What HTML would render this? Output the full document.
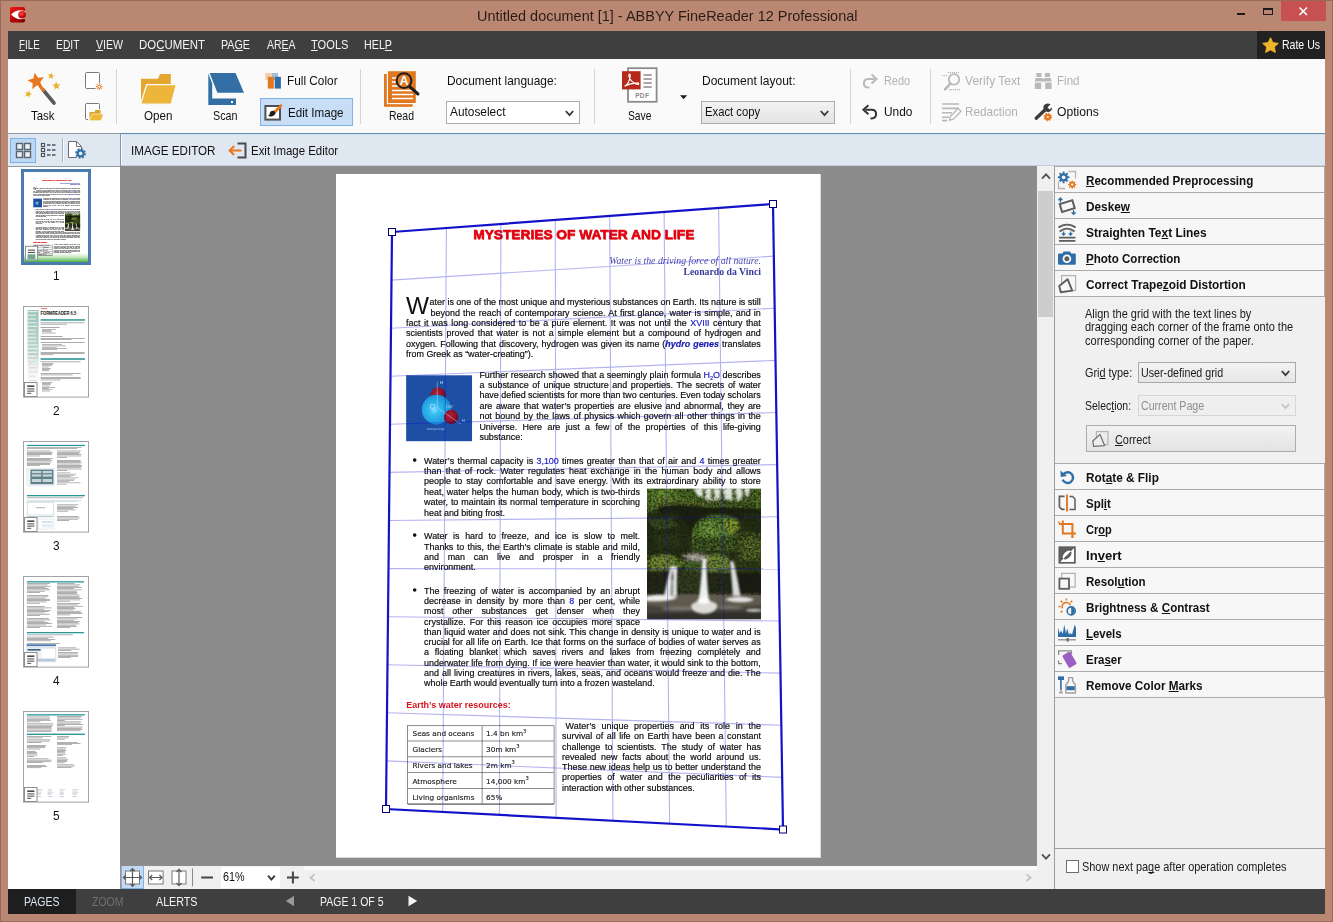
<!DOCTYPE html>
<html lang="en"><head><meta charset="utf-8"><title>Untitled document [1] - ABBYY FineReader 12 Professional</title>
<style>
html,body{margin:0;padding:0;}
body{width:1333px;height:922px;overflow:hidden;position:relative;background:#BA8773;font-family:"Liberation Sans",sans-serif;}
.b{position:absolute;box-sizing:border-box;}
.t{position:absolute;white-space:nowrap;line-height:1;transform-origin:0 50%;display:inline-block;}
.t u{text-decoration:underline;text-underline-offset:1px;text-decoration-skip-ink:none;}
svg{position:absolute;overflow:visible;}
.doc{position:absolute;width:794px;height:1123px;transform:scale(0.61);transform-origin:0 0;font-family:"Liberation Sans",sans-serif;font-size:14.667px;color:#0c0c0c;overflow:hidden;}
.doc>div,.doc>svg{position:absolute;}
.ln{-webkit-text-stroke:0.3px currentColor;white-space:nowrap;line-height:16.85px;height:16.85px;text-align:left;}
.ln.j{text-align:justify;text-align-last:justify;white-space:normal;}
.ln b{font-weight:normal;}
.bl{color:#2020C8;}
.hg{color:#1818B0;font-weight:bold !important;font-style:italic;}
.ttl{font-weight:bold;font-size:21.33px;line-height:1;color:#E2000F;white-space:nowrap;transform-origin:0 50%;-webkit-text-stroke:0.9px #E2000F;text-shadow:0.6px 0.6px 1px rgba(200,0,0,0.5);}
.q1{font-family:"Liberation Serif",serif;font-style:italic;font-size:16px;line-height:1;color:#4848B0;white-space:nowrap;}
.q2{font-family:"Liberation Serif",serif;font-weight:bold;font-size:16px;line-height:1;color:#3A3A9A;white-space:nowrap;}
.dc{font-size:40px;line-height:1;color:#111;}
.bu{width:6px;height:6px;border-radius:50%;background:#111;}
.h2{font-weight:bold;font-size:13.33px;line-height:1;color:#D8121C;white-space:nowrap;transform-origin:0 50%;}
.tbl{border:1.4px solid #444;box-sizing:border-box;font-family:"DejaVu Sans","Liberation Sans",sans-serif;font-size:12px;color:#222;}
.tr{position:absolute;left:0;right:0;border-bottom:1.4px solid #444;box-sizing:border-box;}
.tr:last-of-type{border-bottom:none;}
.tc{position:absolute;top:50%;transform:translateY(-44%);-webkit-text-stroke:0.25px currentColor;white-space:nowrap;line-height:1;}
.tc sup{font-size:8.5px;vertical-align:top;position:relative;top:-3px;}
.tv{position:absolute;top:0;bottom:0;width:1.4px;background:#444;}
.ln sub{font-size:9px;vertical-align:baseline;position:relative;top:3px;}
.doc.th{transform:scale(0.0806);color:#222;-webkit-text-stroke:0.5px #222;}
.doc.th .bl{-webkit-text-stroke:0.5px #2020C8;}
.doc.th .ttl{-webkit-text-stroke:1.5px #E2000F;text-shadow:none;}
.doc.th .q1,.doc.th .q2{-webkit-text-stroke:0.6px #4848B0;}
.doc.th .h2{-webkit-text-stroke:1.5px #D8121C;}
.doc.th .tbl{-webkit-text-stroke:1px #444;border-width:4px;}
.doc.th .tr{border-bottom-width:4px;}.doc.th .tv{width:4px;}
</style></head><body>
<div class="b " style="left:0px;top:0px;width:1333px;height:922px;border:1px solid #976B5B;"></div>
<svg style="left:10px;top:7px" width="16" height="16" viewBox="0 0 16 16">
<defs><linearGradient id="ig" x1="0" y1="0" x2="0.6" y2="1"><stop offset="0" stop-color="#F01818"/><stop offset="0.5" stop-color="#CC0808"/><stop offset="1" stop-color="#8A0000"/></linearGradient>
<radialGradient id="ib" cx="0.4" cy="0.35" r="0.7"><stop offset="0" stop-color="#FF4A4A"/><stop offset="0.6" stop-color="#D01010"/><stop offset="1" stop-color="#8A0000"/></radialGradient></defs>
<rect x="0" y="0" width="15" height="15.6" rx="1.8" fill="url(#ig)"/>
<path d="M1 7.6 C5 3.4 10 2.2 15 4.2 L15 11.6 C10 13.4 5 12 1 7.6Z" fill="#fff"/>
<circle cx="12" cy="7.8" r="3.8" fill="url(#ib)"/></svg>
<span class="t " style="left:476.50px;top:7.00px;font-size:15px;line-height:17px;color:#2a1d18;transform:scaleX(0.9654);">Untitled document [1] - ABBYY FineReader 12 Professional</span>
<div class="b " style="left:1237px;top:12.5px;width:8px;height:2px;background:#1a1a1a;"></div>
<div class="b " style="left:1263px;top:8px;width:10px;height:7px;border:1px solid #1a1a1a;border-top-width:2px;"></div>
<div class="b " style="left:1281px;top:1px;width:45px;height:20px;background:#C75050;"></div>
<svg style="left:1298px;top:6px" width="11" height="11" viewBox="0 0 11 11"><path d="M1.5 1.5 L9 9 M9 1.5 L1.5 9" stroke="#fff" stroke-width="1.6" fill="none"/></svg>
<div class="b " style="left:8px;top:31px;width:1317px;height:28px;background:#3F3F3F;"></div>
<span class="t " style="left:19.00px;top:37.30px;font-size:13px;line-height:15px;color:#F4F4F4;transform:scaleX(0.7558);"><u>F</u>ILE</span>
<span class="t " style="left:56.00px;top:37.30px;font-size:13px;line-height:15px;color:#F4F4F4;transform:scaleX(0.7936);">E<u>D</u>IT</span>
<span class="t " style="left:96.00px;top:37.30px;font-size:13px;line-height:15px;color:#F4F4F4;transform:scaleX(0.8127);"><u>V</u>IEW</span>
<span class="t " style="left:139.00px;top:37.30px;font-size:13px;line-height:15px;color:#F4F4F4;transform:scaleX(0.8787);">DO<u>C</u>UMENT</span>
<span class="t " style="left:221.00px;top:37.30px;font-size:13px;line-height:15px;color:#F4F4F4;transform:scaleX(0.8248);">PA<u>G</u>E</span>
<span class="t " style="left:266.50px;top:37.30px;font-size:13px;line-height:15px;color:#F4F4F4;transform:scaleX(0.8050);">AR<u>E</u>A</span>
<span class="t " style="left:311.00px;top:37.30px;font-size:13px;line-height:15px;color:#F4F4F4;transform:scaleX(0.8556);"><u>T</u>OOLS</span>
<span class="t " style="left:364.00px;top:37.30px;font-size:13px;line-height:15px;color:#F4F4F4;transform:scaleX(0.8245);">HEL<u>P</u></span>
<div class="b " style="left:1257px;top:31px;width:68px;height:28px;background:#222222;"></div>
<svg style="left:1262px;top:37px" width="17" height="16" viewBox="0 0 17 16"><path d="M8.5 0.6 L10.9 5.6 L16.4 6.3 L12.4 10.1 L13.4 15.5 L8.5 12.9 L3.6 15.5 L4.6 10.1 L0.6 6.3 L6.1 5.6Z" fill="#F0B429" stroke="#F0B429" stroke-width="0.8" stroke-linejoin="round"/></svg>
<span class="t " style="left:1282.00px;top:37.30px;font-size:13px;line-height:15px;color:#fff;transform:scaleX(0.8092);">Rate Us</span>
<div class="b " style="left:8px;top:889px;width:1317px;height:25px;background:#3F3F3F;"></div>
<div class="b " style="left:8px;top:889px;width:68px;height:25px;background:#1E1E1E;"></div>
<span class="t " style="left:24.00px;top:894.30px;font-size:13px;line-height:15px;color:#DCE6F2;transform:scaleX(0.8099);">PAGES</span>
<span class="t " style="left:92.00px;top:894.30px;font-size:13px;line-height:15px;color:#707070;transform:scaleX(0.8078);">ZOOM</span>
<span class="t " style="left:156.00px;top:894.30px;font-size:13px;line-height:15px;color:#F4F4F4;transform:scaleX(0.8244);">ALERTS</span>
<svg style="left:285px;top:895px" width="10" height="12" viewBox="0 0 10 12"><path d="M9 0.8 L0.8 6 L9 11.2Z" fill="#9A9A9A"/></svg>
<span class="t " style="left:319.50px;top:894.30px;font-size:13px;line-height:15px;color:#F4F4F4;transform:scaleX(0.8088);">PAGE 1 OF 5</span>
<svg style="left:408px;top:895px" width="10" height="12" viewBox="0 0 10 12"><path d="M0.5 0.8 L9.2 6 L0.5 11.2Z" fill="#F4F4F4"/></svg>
<div class="b " style="left:8px;top:59px;width:1317px;height:75px;background:#FAFAFA;"></div>
<div class="b " style="left:8px;top:133px;width:113px;height:1px;background:#909BA8;"></div>
<div class="b " style="left:121px;top:133px;width:1204px;height:1px;background:#6888AC;"></div>
<div class="b " style="left:8px;top:134px;width:1317px;height:32px;background:#DFE7F1;"></div>
<div class="b " style="left:121px;top:134px;width:1204px;height:1px;background:#CFE6F8;"></div>
<div class="b " style="left:120px;top:133px;width:1px;height:34px;background:#8797A8;"></div>
<div class="b " style="left:121px;top:134px;width:1px;height:32px;background:#F4F8FC;"></div>
<div class="b " style="left:8px;top:166px;width:112px;height:1px;background:#909BA8;z-index:3;"></div>
<div class="b " style="left:121px;top:165px;width:1204px;height:1px;background:#C4CDD8;"></div>
<div class="b " style="left:116px;top:69px;width:1px;height:55px;background:#D4D4D4;"></div>
<div class="b " style="left:360px;top:69px;width:1px;height:55px;background:#D4D4D4;"></div>
<div class="b " style="left:594px;top:69px;width:1px;height:55px;background:#D4D4D4;"></div>
<div class="b " style="left:850px;top:69px;width:1px;height:55px;background:#D4D4D4;"></div>
<div class="b " style="left:930px;top:69px;width:1px;height:55px;background:#D4D4D4;"></div>
<svg style="left:0;top:0" width="1333" height="170" viewBox="0 0 1333 170">
<polygon points="34.67,72.73 37.95,77.80 43.97,77.27 40.16,81.96 42.53,87.51 36.89,85.34 32.34,89.31 32.67,83.28 27.49,80.18 33.32,78.62" fill="#E8761C"/>
<polygon points="51.63,72.45 52.15,74.89 54.56,75.50 52.41,76.75 52.58,79.24 50.72,77.58 48.41,78.50 49.42,76.22 47.82,74.31 50.30,74.56" fill="#E9B130"/>
<polygon points="56.03,81.62 57.38,84.17 60.27,84.16 58.25,86.23 59.16,88.97 56.57,87.69 54.24,89.40 54.65,86.54 52.31,84.86 55.15,84.37" fill="#E9B130"/>
<polygon points="29.28,90.33 29.62,92.93 32.09,93.80 29.73,94.93 29.66,97.55 27.86,95.64 25.35,96.39 26.60,94.09 25.11,91.93 27.69,92.41" fill="#E9B130"/>
<path d="M43.2 90 L54 103" stroke="#595959" stroke-width="3.6" stroke-linecap="round"/>
<path d="M40.3 86.5 L43.4 90.3" stroke="#E8761C" stroke-width="3.2" stroke-linecap="round"/>
<rect x="85.5" y="72.5" width="14" height="16" rx="1" fill="#fff" stroke="#7A7A7A"/>
<circle cx="99.3" cy="86.7" r="4.2" fill="#FAFAFA"/>
<g stroke="#E8761C" stroke-width="1" fill="none"><circle cx="99.3" cy="86.7" r="1.5"/><path d="M99.3 83.3v1.5M99.3 88.6v1.5M95.9 86.7h1.5M101.2 86.7h1.5M96.9 84.3l1 1M100.7 88.1l1 1M96.9 89.1l1-1M100.7 85.3l1-1"/></g>
<rect x="85.5" y="103.5" width="14" height="16" rx="1" fill="#fff" stroke="#7A7A7A"/>
<rect x="88" y="109" width="16" height="12.5" fill="#FAFAFA"/>
<path d="M89.5 120.5 L89.5 112 L95 112 L95 110 L100.5 110 L100.5 112 L100.5 120.5Z" fill="#D9A52E"/>
<path d="M89.5 120.5 L92 114 L103.5 114 L101 120.5Z" fill="#EDB738" stroke="#FAFAFA" stroke-width="0.6"/>
<path d="M141 104 L141 78.7 L158 78.7 L160 74 L170.8 74 L170.8 104Z" fill="#E3A72F"/>
<path d="M140.6 104.2 L146.6 84.7 L176.4 84.7 L171.2 104.2Z" fill="#EDB53A" stroke="#FAFAFA" stroke-width="1.3"/>
<path d="M209.6 73 L235.5 73 L244 92.8 L217.4 92.8Z" fill="#336FA5"/>
<path d="M208.3 73.6 L212.2 83.6 L212.2 98.4 L236 98.4 L236 105 L208.3 105Z" fill="#336FA5"/>
<rect x="231" y="101" width="2" height="2" fill="#fff"/>
<rect x="265.3" y="73" width="6.5" height="7" fill="#F2CDB0"/><rect x="272" y="73" width="6" height="7" fill="#A3BDD6"/>
<rect x="267.8" y="76.8" width="6" height="11.8" fill="#E07820"/><rect x="274.7" y="76.8" width="6.2" height="11.8" fill="#2F6DA6"/>
<rect x="260.5" y="98.5" width="92" height="27" fill="#C7DEF6" stroke="#7FB2E6"/>
<rect x="265.4" y="106" width="14.6" height="13.6" fill="#fff" stroke="#505050" stroke-width="2"/>
<path d="M281.6 103.4 L273.2 111.2 L275.3 113.4 L282.3 106.2Z" fill="#E8761C"/>
<path d="M273.4 110.8 C271 110.6 269.6 112.4 269.7 114 C269.5 115 268.6 115.3 267.8 115.2 C269.6 116.9 273.4 116.9 275 114.6 C275.8 113.4 275.4 112 274.6 111.6Z" fill="#1E1E1E"/>
<rect x="384" y="74" width="28.6" height="32.8" fill="#E07820"/>
<rect x="387.4" y="70.6" width="29" height="33" fill="#E07820" stroke="#FAFAFA" stroke-width="1.2"/>
<g stroke="#fff" stroke-width="1.6"><path d="M392 78h6M392 82h5M392 86h7M392 90.5h21M392 94.5h21M392 98.5h21"/></g>
<path d="M409.6 86.6 L418 94" stroke="#1E1E1E" stroke-width="3" stroke-linecap="round"/>
<circle cx="404" cy="80.6" r="7.4" fill="#E07820" stroke="#1E1E1E" stroke-width="2"/>
<text x="404" y="85.2" font-family="Liberation Sans, sans-serif" font-weight="bold" font-size="12.5" fill="#fff" text-anchor="middle">A</text>
<rect x="628" y="68.2" width="28.6" height="33.6" fill="#fff" stroke="#8C8C8C" stroke-width="1.8"/>
<rect x="622" y="71.2" width="18.6" height="18.2" fill="#B5281C"/>
<path d="M624.6 86.2 C627.5 84.6 629.8 80 630.3 75.6 C630.5 73.6 628.8 73.5 628.8 75.4 C629 79.4 633.6 83.8 637.4 84.4 C639.4 84.6 639.3 82.8 637.2 82.9 C633 83 627.4 84.6 624.6 86.2Z" fill="none" stroke="#fff" stroke-width="1.1"/>
<g stroke="#8C8C8C" stroke-width="1.3"><path d="M643.4 75h8.4M643.4 79h8.4M643.4 83h8.4M643.4 87h8.4"/></g>
<text x="642.2" y="98.2" font-family="Liberation Sans, sans-serif" font-weight="bold" font-size="6.6" fill="#8C8C8C" text-anchor="middle" letter-spacing="0.3">PDF</text>
<path d="M680 95.3 L687.2 95.3 L683.6 99.2Z" fill="#1E1E1E"/>
<path d="M869.5 87.6 L868.6 87.6 C865.6 87.6 863.9 85.6 863.9 83.2 C863.9 80.8 865.6 78.9 868.6 78.9 L874.6 78.9" fill="none" stroke="#B9B9B9" stroke-width="2"/>
<path d="M871.6 74.4 L876.6 78.9 L871.6 83.4" fill="none" stroke="#B9B9B9" stroke-width="2"/>
<path d="M870.5 118.4 L871.4 118.4 C874.4 118.4 876.1 116.4 876.1 114 C876.1 111.6 874.4 109.7 871.4 109.7 L865.4 109.7" fill="none" stroke="#333" stroke-width="2"/>
<path d="M868.4 105.2 L863.4 109.7 L868.4 114.2" fill="none" stroke="#333" stroke-width="2"/>
<g stroke="#B9B9B9" fill="none"><circle cx="954" cy="79.4" r="5.2" stroke-width="1.8" fill="#FAFAFA"/><path d="M950.4 83.6 L945 89.4" stroke-width="2.6" stroke-linecap="round"/><path d="M942 75.5h6M948 72.6h11M949 89.6h11" stroke-width="1.2" stroke-dasharray="1.2 0.8"/></g>
<g stroke="#B9B9B9" fill="none" stroke-width="1.6"><path d="M942 104h17M942 108.4h17M942 112.8h10M942 117.2h7M942 120.6h5"/></g>
<path d="M949.4 120.4 L950.6 116.2 L958.2 108.4 L961 111.2 L953.4 119.2Z" fill="#FAFAFA" stroke="#B9B9B9" stroke-width="1.3"/>
<g fill="#B9B9B9"><rect x="1036.4" y="73" width="5" height="4"/><rect x="1045" y="73" width="5" height="4"/><path d="M1035.6 78 h6.6 v3.4 h-7.4z"/><path d="M1044.2 78 h6.6 l0.8 3.4 h-7.4z"/><rect x="1034.8" y="82.6" width="6.4" height="6.4"/><rect x="1045.2" y="82.6" width="6.4" height="6.4"/><rect x="1041.6" y="78.6" width="3.2" height="3"/></g>
<path d="M1036.2 118.2 L1045.4 109.6" stroke="#3C3C3C" stroke-width="3.4" stroke-linecap="round"/>
<path d="M1050.6 104.2 L1047.6 107.2 L1049.4 109.4 L1052 107.4 C1052.4 110.8 1049 113 1045.8 111.6 C1043.8 110.8 1042.8 108.2 1043.6 106 C1044.6 103.4 1047.8 102.6 1050.6 104.2Z" fill="#3C3C3C"/>
<circle cx="1047.8" cy="117" r="3.3" fill="#E8761C"/><circle cx="1047.8" cy="117" r="3.4" fill="none" stroke="#E8761C" stroke-width="1.8" stroke-dasharray="1.3 1.37"/><circle cx="1047.8" cy="117" r="1.1" fill="#FAFAFA"/>
<rect x="10.5" y="138.5" width="25" height="24" fill="#BDD8F4" stroke="#7FB2E6"/>
<g fill="#EEF1F4" stroke="#5A6470" stroke-width="1.4"><rect x="16.5" y="143.5" width="6" height="6"/><rect x="24.5" y="143.5" width="6" height="6"/><rect x="16.5" y="151.5" width="6" height="6"/><rect x="24.5" y="151.5" width="6" height="6"/></g>
<g fill="#fff" stroke="#4A5460" stroke-width="1.2"><rect x="41.5" y="143.5" width="3" height="3"/><rect x="41.5" y="148.5" width="3" height="3"/><rect x="41.5" y="153.5" width="3" height="3"/></g>
<g stroke="#4A5460" stroke-width="1.5"><path d="M47 145h3.5M52 145h3.5M47 150h3.5M52 150h3.5M47 155h3.5M52 155h3.5"/></g>
<rect x="62" y="138" width="1" height="24" fill="#A8B2BE"/><rect x="63" y="138" width="1" height="24" fill="#F6F9FC"/>
<path d="M68.5 141.5 L76.5 141.5 L81.5 146.5 L81.5 157.5 L68.5 157.5Z" fill="#fff" stroke="#6E6E6E"/><path d="M76.5 141.5 L76.5 146.5 L81.5 146.5" fill="none" stroke="#6E6E6E"/>
<circle cx="80.6" cy="153.4" r="5.6" fill="#DFE7F1"/><circle cx="80.6" cy="153.4" r="2.9" fill="none" stroke="#2F6DA6" stroke-width="2"/><circle cx="80.6" cy="153.4" r="4.4" fill="none" stroke="#2F6DA6" stroke-width="1.9" stroke-dasharray="1.7 1.75"/>
<path d="M237.5 143.5 L245.5 143.5 L245.5 157.5 L237.5 157.5" fill="none" stroke="#4A4A4A" stroke-width="2"/>
<path d="M241.5 150.5 L230 150.5 M234.2 146 L229.6 150.5 L234.2 155" fill="none" stroke="#E8761C" stroke-width="2"/>
</svg>
<span class="t " style="left:30.50px;top:108.00px;font-size:13.4px;line-height:15px;color:#111;transform:scaleX(0.8529);">Task</span>
<span class="t " style="left:143.60px;top:108.00px;font-size:13.4px;line-height:15px;color:#111;transform:scaleX(0.8664);">Open</span>
<span class="t " style="left:213.00px;top:108.00px;font-size:13.4px;line-height:15px;color:#111;transform:scaleX(0.8021);">Scan</span>
<span class="t " style="left:287.40px;top:73.00px;font-size:13.4px;line-height:15px;color:#111;transform:scaleX(0.8825);">Full Color</span>
<span class="t " style="left:288.40px;top:104.60px;font-size:13.4px;line-height:15px;color:#111;transform:scaleX(0.8680);">Edit Image</span>
<span class="t " style="left:388.60px;top:108.00px;font-size:13.4px;line-height:15px;color:#111;transform:scaleX(0.7804);">Read</span>
<span class="t " style="left:447.00px;top:73.00px;font-size:13.4px;line-height:15px;color:#111;transform:scaleX(0.8895);">Document language:</span>
<span class="t " style="left:627.50px;top:108.00px;font-size:13.4px;line-height:15px;color:#111;transform:scaleX(0.7694);">Save</span>
<span class="t " style="left:702.00px;top:73.00px;font-size:13.4px;line-height:15px;color:#111;transform:scaleX(0.8976);">Document layout:</span>
<span class="t " style="left:884.40px;top:73.00px;font-size:13.4px;line-height:15px;color:#B2B2B2;transform:scaleX(0.8116);">Redo</span>
<span class="t " style="left:884.40px;top:104.00px;font-size:13.4px;line-height:15px;color:#111;transform:scaleX(0.8865);">Undo</span>
<span class="t " style="left:964.80px;top:73.00px;font-size:13.4px;line-height:15px;color:#B2B2B2;transform:scaleX(0.9014);">Verify Text</span>
<span class="t " style="left:964.80px;top:104.00px;font-size:13.4px;line-height:15px;color:#B2B2B2;transform:scaleX(0.8734);">Redaction</span>
<span class="t " style="left:1057.20px;top:73.00px;font-size:13.4px;line-height:15px;color:#B2B2B2;transform:scaleX(0.8631);">Find</span>
<span class="t " style="left:1057.20px;top:104.00px;font-size:13.4px;line-height:15px;color:#111;transform:scaleX(0.9051);">Options</span>
<div class="b " style="left:446px;top:101px;width:134px;height:23px;background:#fff;border:1px solid #ABADB3;"><svg style="right:5px;top:8px" width="9" height="7" viewBox="0 0 9 7"><path d="M0.8 1 L4.5 5.2 L8.2 1" fill="none" stroke="#3A3A3A" stroke-width="1.8"/></svg></div>
<span class="t " style="left:449.50px;top:104.00px;font-size:13.4px;line-height:15px;color:#111;transform:scaleX(0.8870);">Autoselect</span>
<div class="b " style="left:701px;top:101px;width:134px;height:23px;background:linear-gradient(#F2F2F2,#E4E4E4);border:1px solid #ACACAC;"><svg style="right:5px;top:8px" width="9" height="7" viewBox="0 0 9 7"><path d="M0.8 1 L4.5 5.2 L8.2 1" fill="none" stroke="#3A3A3A" stroke-width="1.8"/></svg></div>
<span class="t " style="left:704.60px;top:104.00px;font-size:13.4px;line-height:15px;color:#111;transform:scaleX(0.8422);">Exact copy</span>
<span class="t " style="left:130.50px;top:143.20px;font-size:13px;line-height:15px;color:#111;transform:scaleX(0.8953);">IMAGE EDITOR</span>
<span class="t " style="left:250.75px;top:143.20px;font-size:13px;line-height:15px;color:#111;transform:scaleX(0.8794);">Exit Image Editor</span>
<div class="b " style="left:8px;top:166px;width:112px;height:723px;background:#fff;"></div>
<div class="b " style="left:21px;top:169px;width:70px;height:96px;background:#fff;border:3px solid #4A7AAE;"></div>
<div class="b " style="left:24px;top:253px;width:64px;height:9px;background:linear-gradient(#fff,#C6E8C0 45%,#4DB04A);"></div>
<div class="doc th" style="left:24px;top:172px;"><div class="ttl" style="left:224.9px;top:90.0px;transform:scaleX(1.0547);">MYSTERIES OF WATER AND LIFE</div>
<div class="q1" style="right:97.3px;top:134.4px;">Water is the driving force of all nature.</div>
<div class="q2" style="right:97.3px;top:151.5px;">Leonardo da Vinci</div>
<div class="dc" style="left:114.8px;top:195.4px;">W</div>
<div class="ln " style="left:153.4px;top:202.4px;word-spacing:-0.034px;">ater is one of the most unique and mysterious substances on Earth. Its nature is still</div>
<div class="ln " style="left:155.1px;top:219.3px;word-spacing:1.152px;">beyond the reach of contemporary science. At first glance, water is simple, and in</div>
<div class="ln " style="left:114.8px;top:236.2px;word-spacing:1.622px;">fact it was long considered to be a pure element. It was not until the <b class="bl">XVIII</b> century that</div>
<div class="ln " style="left:114.8px;top:253.0px;word-spacing:2.201px;">scientists proved that water is not a simple element but a compound of hydrogen and</div>
<div class="ln " style="left:114.8px;top:269.9px;word-spacing:0.831px;">oxygen. Following that discovery, hydrogen was given its name (<b class="hg">hydro genes</b> translates</div>
<div class="ln " style="left:114.8px;top:286.8px;">from Greek as “water-creating”).</div>
<div class="ln " style="left:235.1px;top:321.6px;word-spacing:0.193px;">Further research showed that a seemingly plain formula <b class="bl">H<sub>2</sub>O</b> describes</div>
<div class="ln " style="left:235.1px;top:338.4px;word-spacing:1.838px;">a substance of unique structure and properties. The secrets of water</div>
<div class="ln " style="left:235.1px;top:355.3px;word-spacing:-0.062px;">have defied scientists for more than two centuries. Even today scholars</div>
<div class="ln " style="left:235.1px;top:372.1px;word-spacing:1.784px;">are aware that water’s properties are elusive and abnormal, they are</div>
<div class="ln " style="left:235.1px;top:389.0px;word-spacing:1.518px;">not bound by the laws of physics which govern all other things in the</div>
<div class="ln " style="left:235.1px;top:405.8px;word-spacing:4.837px;">Universe. Here are just a few of the properties of this life-giving</div>
<div class="ln " style="left:235.1px;top:422.7px;">substance:</div>
<div class="bu" style="left:125.6px;top:465.5px;"></div>
<div class="ln " style="left:144.3px;top:462.2px;word-spacing:1.339px;">Water’s thermal capacity is <b class="bl">3,100</b> times greater than that of air and <b class="bl">4</b> times greater</div>
<div class="ln " style="left:144.3px;top:479.1px;word-spacing:2.900px;">than that of rock. Water regulates heat exchange in the human body and allows</div>
<div class="ln " style="left:144.3px;top:495.9px;word-spacing:2.377px;">people to stay comfortable and save energy. With its extraordinary ability to store</div>
<div class="ln " style="left:144.3px;top:512.8px;word-spacing:0.782px;">heat, water helps the human body, which is two-thirds</div>
<div class="ln " style="left:144.3px;top:529.6px;word-spacing:0.857px;">water, to maintain its normal temperature in scorching</div>
<div class="ln " style="left:144.3px;top:546.5px;">heat and biting frost.</div>
<div class="bu" style="left:125.6px;top:589.1px;"></div>
<div class="ln " style="left:144.3px;top:585.8px;word-spacing:5.059px;">Water is hard to freeze, and ice is slow to melt.</div>
<div class="ln " style="left:144.3px;top:602.6px;word-spacing:1.421px;">Thanks to this, the Earth’s climate is stable and mild,</div>
<div class="ln " style="left:144.3px;top:619.3px;word-spacing:10.222px;">and man can live and prosper in a friendly</div>
<div class="ln " style="left:144.3px;top:636.1px;">environment.</div>
<div class="bu" style="left:125.6px;top:678.8px;"></div>
<div class="ln " style="left:144.3px;top:675.5px;word-spacing:3.089px;">The freezing of water is accompanied by an abrupt</div>
<div class="ln " style="left:144.3px;top:692.3px;word-spacing:3.018px;">decrease in density by more than <b class="bl">8</b> per cent, while</div>
<div class="ln " style="left:144.3px;top:709.1px;word-spacing:10.369px;">most other substances get denser when they</div>
<div class="ln " style="left:144.3px;top:725.9px;word-spacing:2.607px;">crystallize. For this reason ice occupies more space</div>
<div class="ln " style="left:144.3px;top:742.7px;word-spacing:0.658px;">than liquid water and does not sink. This change in density is unique to water and is</div>
<div class="ln " style="left:144.3px;top:759.4px;word-spacing:0.416px;">crucial for all life on Earth. Ice that forms on the surface of bodies of water serves as</div>
<div class="ln " style="left:144.3px;top:776.2px;word-spacing:5.310px;">a floating blanket which saves rivers and lakes from freezing completely and</div>
<div class="ln " style="left:144.3px;top:793.0px;word-spacing:0.199px;">underwater life from dying. If ice were heavier than water, it would sink to the bottom,</div>
<div class="ln " style="left:144.3px;top:809.8px;word-spacing:0.928px;">and all living creatures in rivers, lakes, seas, and oceans would freeze and die. The</div>
<div class="ln " style="left:144.3px;top:826.6px;">whole Earth would eventually turn into a frozen wasteland.</div>
<div class="h2" style="left:114.8px;top:864.3px;transform:scaleX(1.1046);">Earth’s water resources:</div>
<div class="tbl" style="left:117.4px;top:903.6px;width:240.3px;height:129.5px;"><div class="tr" style="top:0.0px;height:25.9px;"><span class="tc" style="left:7px;">Seas and oceans</span><span class="tc" style="left:127.7px;">1.4 bn km<sup>3</sup></span></div><div class="tr" style="top:25.9px;height:25.9px;"><span class="tc" style="left:7px;">Glaciers</span><span class="tc" style="left:127.7px;">30m km<sup>3</sup></span></div><div class="tr" style="top:51.8px;height:25.9px;"><span class="tc" style="left:7px;">Rivers and lakes</span><span class="tc" style="left:127.7px;">2m km<sup>3</sup></span></div><div class="tr" style="top:77.7px;height:25.9px;"><span class="tc" style="left:7px;">Atmosphere</span><span class="tc" style="left:127.7px;">14,000 km<sup>3</sup></span></div><div class="tr" style="top:103.6px;height:25.9px;"><span class="tc" style="left:7px;">Living organisms</span><span class="tc" style="left:127.7px;">65%</span></div><div class="tv" style="left:120.7px;"></div></div>
<div class="ln " style="left:376.4px;top:897.0px;word-spacing:5.384px;">Water’s unique properties and its role in the</div>
<div class="ln " style="left:370.5px;top:913.8px;word-spacing:1.641px;">survival of all life on Earth have been a constant</div>
<div class="ln " style="left:370.5px;top:930.7px;word-spacing:3.782px;">challenge to scientists. The study of water has</div>
<div class="ln " style="left:370.5px;top:947.5px;word-spacing:3.740px;">revealed new facts about the world around us.</div>
<div class="ln " style="left:370.5px;top:964.3px;word-spacing:0.519px;">These new ideas help us to better understand the</div>
<div class="ln " style="left:370.5px;top:981.2px;word-spacing:5.025px;">properties of water and the peculiarities of its</div>
<div class="ln " style="left:370.5px;top:998.0px;">interaction with other substances.</div>
<svg style="left:114.9px;top:329.5px" width="108" height="108" viewBox="0 0 66 66">
<defs><radialGradient cx="0.42" cy="0.52" r="0.62"><stop offset="0" stop-color="#7FE0FF"/><stop offset="0.25" stop-color="#35BDF0"/><stop offset="0.8" stop-color="#1C97DA"/><stop offset="1" stop-color="#1877C4"/></radialGradient>
<radialGradient cx="0.4" cy="0.4" r="0.7"><stop offset="0" stop-color="#B0223A"/><stop offset="0.6" stop-color="#8C1226"/><stop offset="1" stop-color="#5A0A18"/></radialGradient><filter><feGaussianBlur stdDeviation="0.35"/></filter></defs>
<rect width="66" height="66" fill="#1D4FA5"/>
<g filter="url(#mb)"><circle cx="32" cy="19.7" r="7.6" fill="url(#mh)"/><circle cx="30.5" cy="34.4" r="14.8" fill="url(#mo)"/><circle cx="45" cy="41.8" r="7.2" fill="url(#mh)"/>
<path d="M31.2 6.5 L31.2 32.6 L55 49" fill="none" stroke="#E8F4FF" stroke-width="0.45" opacity="0.85"/></g>
<g font-family="Liberation Sans, sans-serif" fill="#DCEBFA"><text x="33.8" y="8.8" font-size="4.2">H</text><text x="55.6" y="46.6" font-size="4.2" opacity="0.8">H</text><text x="23.6" y="33.4" font-size="7.4" opacity="0.85">O</text><text x="39.4" y="32.8" font-size="4" opacity="0.7">105°</text><text x="20.6" y="55" font-size="2.6" opacity="0.6">молекула воды</text></g>
</svg>
<svg style="left:510.0px;top:516.4px" width="186.7" height="214.1" viewBox="0 0 114 130.6" preserveAspectRatio="none">
<defs>
<filter x="-10%" y="-10%" width="120%" height="120%" color-interpolation-filters="sRGB"><feGaussianBlur stdDeviation="1.1"/></filter>
<filter x="-20%" y="-10%" width="140%" height="120%" color-interpolation-filters="sRGB"><feGaussianBlur stdDeviation="1.0"/></filter>
<filter x="0" y="0" width="100%" height="100%" color-interpolation-filters="sRGB"><feTurbulence type="fractalNoise" baseFrequency="0.42" numOctaves="3" seed="11"/><feColorMatrix values="0 0 0 0 0.08  0 0 0 0 0.10  0 0 0 0 0.04  2.6 2.6 0 0 -2.3"/></filter>
<filter x="0" y="0" width="100%" height="100%" color-interpolation-filters="sRGB"><feTurbulence type="fractalNoise" baseFrequency="0.5" numOctaves="3" seed="5"/><feColorMatrix values="0 0 0 0 0.50  0 0 0 0 0.62  0 0 0 0 0.24  3 0 3 0 -2.7"/></filter>
<clipPath><rect width="114" height="130.6"/></clipPath>
<clipPath><path d="M0 0 H114 V19 H60 L30 17 L12 19 L0 24Z M46 36 C54 28 74 25 90 31 L92 62 L44 62Z M0 66 H30 V80 H0Z M60 66 H82 V82 H60Z M90 44 H114 V72 H92Z"/></clipPath>
</defs>
<g clip-path="url(#pc)"><rect width="114" height="130.6" fill="#2C3218"/>
<g filter="url(#pb)">
<rect x="-4" y="-4" width="122" height="34" fill="#384C1E"/>
<path d="M46 -3 L104 -3 L100 8 L92 12 L78 10 L64 13 L52 8Z" fill="#CBD6C6"/>
<path d="M56 -2 L57 13 M65 -2 L65 10 M74 -2 L75 13 M86 -2 L87 15 M96 -2 L97 12 M104 -2 L103 16 M60 6 L100 8" stroke="#3A4822" stroke-width="2.8" fill="none"/>
<path d="M-4 -4 L28 -4 L36 8 L22 17 L-4 20Z" fill="#4A6C26"/>
<path d="M8 2 L20 -2 L26 9 L12 12Z" fill="#62882E"/>
<path d="M30 4 L46 2 L50 14 L34 16Z" fill="#40601F"/>
<path d="M104 -4 L118 -4 L118 30 L108 22Z" fill="#40601F"/>
<path d="M10 9 L58 16 M12 15 L42 20" stroke="#866436" stroke-width="1.3" fill="none" opacity="0.8"/>
<path d="M42 36 C50 27 72 23 90 30 L92 62 L74 66 L56 64 L42 60Z" fill="#466A28"/>
<path d="M52 36 C60 30 70 30 78 38 L80 54 L58 58Z" fill="#5A8234"/>
<path d="M58 40 C62 37 68 39 70 45 L68 52 L60 52Z" fill="#6E983E"/>
<path d="M76 31 L91 31 L93 44 L81 46Z" fill="#7E902C"/>
<path d="M44 48 L90 48 L90 67 L44 67Z" fill="#2C3C1A" opacity="0.85"/>
<path d="M12 17 C30 13 50 17 62 19 C78 18 96 19 118 21 L118 34 C104 32 96 32 91 30 C80 24 66 23.5 58 28 C50 32 46 38 44 47 L38 42 L30 30 L10 26Z" fill="#1C2010"/>
<path d="M-4 24 L30 24 L44 42 L43 65 L22 71 L-4 73Z" fill="#242C14"/>
<path d="M0 30 L24 29 L32 38 L8 42Z" fill="#364620"/>
<path d="M6 46 L30 44 L36 58 L10 62Z" fill="#2B3618"/>
<path d="M88 42 C98 37 110 39 118 45 L118 104 L92 104 L87 80Z" fill="#2F3C18"/>
<path d="M93 50 C100 46 108 48 114 54 L114 70 L95 72Z" fill="#425220"/>
<path d="M94 24 L118 26 L118 46 L99 42Z" fill="#242E13"/>
<path d="M34 66 C42 63 54 63 62 66 L60 73 L40 74Z" fill="#7E7868"/>
<path d="M1 72 C7 65 22 63 29 69 L30 78 L20 82 L2 82Z" fill="#6E8232"/>
<path d="M25 73 C29 70 35 70 38 73 L34 79 L27 79Z" fill="#5C7A2A"/>
<path d="M60 68 C66 64 76 64 81 70 L83 84 L62 86Z" fill="#6A8236"/>
<path d="M37 76 C42 71 52 71 56 77 L54 88 L38 88Z" fill="#466226"/>
<rect x="-4" y="84" width="122" height="26" fill="#1A1C13"/>
<path d="M30 86 C36 80 50 80 54 88 L54 104 L32 104Z" fill="#323C1F"/>
<path d="M61 86 C68 81 80 82 83 90 L84 106 L61 106Z" fill="#262A19"/>
<path d="M2 84 L18 84 L16 104 L0 104Z" fill="#242619"/>
<rect x="-4" y="105" width="122" height="30" fill="#5E5A4E"/>
<path d="M-4 116 L50 122 L118 116 L118 135 L-4 135Z" fill="#44423A"/>
<path d="M-4 125 L118 123 L118 135 L-4 135Z" fill="#302F29"/>
</g>
<g clip-path="url(#pcu)"><rect width="114" height="84" filter="url(#pnl)" opacity="0.5"/></g>
<rect width="114" height="106" filter="url(#pnd)" opacity="0.6"/>
<g filter="url(#pb2)" opacity="0.9">
<path d="M47 0 L56 0 L55 8 L50 6Z M59 0 L64 0 L64 9 L59 11Z M67 0 L73 0 L73 10 L68 9Z M77 0 L85 0 L85 12 L78 10Z M89 0 L95 0 L95 9 L90 12Z M98 0 L103 0 L101 8 L99 8Z" fill="#E4ECE2"/>
</g>
<g filter="url(#pb2)">
<path d="M23.4 78 C21.6 86 19 96 17 107 L23.4 107 C23.6 98 24.4 88 25.6 80 C26.4 88 26.4 98 26.2 107 L30 107 C29.8 96 29.8 86 30.4 79 C28 77 25.4 77 23.4 78Z" fill="#F0F2F2" opacity="0.95"/>
<path d="M22.6 90 L17 107 L30 107 L29.8 92Z" fill="#E4E8E8" opacity="0.55"/>
<path d="M55.4 69 C54.8 84 53.4 98 51.6 112 L61.8 112 C60.4 98 59.4 82 59.4 70Z" fill="#F4F6F6" opacity="0.97"/>
<path d="M82.8 72 C84 84 85.2 96 85.8 107 L93.4 107 C91.6 96 89.4 84 86.6 73Z" fill="#ECEEEE" opacity="0.92"/>
<path d="M40 67 C46 65.4 52 65.6 56 67.6 L55 71 L44 71.6Z" fill="#D8DCD8" opacity="0.5"/>
<path d="M-2 108 C6 105.6 22 105.6 30 108.4 C28 112 8 113.4 -2 112Z" fill="#F4F4F2" opacity="0.95"/>
<path d="M44 117 C46 111 66 110 70 116 C72 122 62 125.4 56 125 C50 124.6 44 122 44 117Z" fill="#F2F2F0" opacity="0.85"/>
<ellipse cx="56.6" cy="112" rx="6.4" ry="3" fill="#fff" opacity="0.9"/>
<path d="M78 110.6 C84 107 100 107 107 110.4 C104 114.4 84 114.8 78 110.6Z" fill="#F0F0EE" opacity="0.9"/>
<ellipse cx="107" cy="121.6" rx="8" ry="1.7" fill="#E8E8E4" opacity="0.75"/>
<ellipse cx="30" cy="120" rx="16" ry="2.2" fill="#A8A8A0" opacity="0.4"/>
<ellipse cx="84" cy="119" rx="12" ry="1.8" fill="#A8A8A0" opacity="0.4"/>
</g></g></svg></div>
<svg style="left:24px;top:172px" width="64" height="90" viewBox="0 0 66 92"><rect x="1.5" y="76.2" width="12.5" height="14" fill="#fff" stroke="#8E8E8E"/><g fill="#4a4a4a"><rect x="4" y="79.6" width="7.4" height="1.1"/><rect x="4" y="82" width="7.4" height="1.1"/></g><rect x="3.6" y="84.4" width="8.2" height="5" fill="#6FA88F"/></svg>
<svg style="left:23px;top:306px" width="66" height="92" viewBox="0 0 66 92"><rect x="0.5" y="0.5" width="65" height="90.6" fill="#fff" stroke="#A2A2A2"/><defs><linearGradient id="g2" x1="0" y1="0" x2="0" y2="1"><stop offset="0" stop-color="#9CC4B8"/><stop offset="0.55" stop-color="#B9D6CD"/><stop offset="0.75" stop-color="#E6EFEC"/><stop offset="1" stop-color="#fff"/></linearGradient></defs><rect x="4.6" y="4" width="11" height="76" fill="url(#g2)"/><g fill="#fff" opacity="0.7"><rect x="5.0" y="5.00" width="9.5" height="1.2"/><rect x="5.0" y="8.70" width="7.9" height="1.2"/><rect x="5.0" y="12.40" width="8.1" height="1.2"/><rect x="5.0" y="16.10" width="8.6" height="1.2"/><rect x="5.0" y="19.80" width="9.4" height="1.2"/><rect x="5.0" y="23.50" width="7.6" height="1.2"/><rect x="5.0" y="27.20" width="7.6" height="1.2"/><rect x="5.0" y="30.90" width="8.5" height="1.2"/><rect x="5.0" y="34.60" width="8.5" height="1.2"/><rect x="5.0" y="38.30" width="9.3" height="1.2"/><rect x="5.0" y="42.00" width="10.0" height="1.2"/><rect x="5.0" y="45.70" width="8.9" height="1.2"/><rect x="5.0" y="49.40" width="8.2" height="1.2"/><rect x="5.0" y="53.10" width="9.8" height="1.2"/><rect x="5.0" y="56.80" width="7.6" height="1.2"/><rect x="5.0" y="60.50" width="9.3" height="1.2"/><rect x="5.0" y="64.20" width="9.3" height="1.2"/><rect x="5.0" y="67.90" width="9.9" height="1.2"/><rect x="5.0" y="71.60" width="10.0" height="1.2"/></g><g fill="#D99" opacity="0.6"><rect x="6.0" y="44.00" width="4.7" height="0.6"/><rect x="6.0" y="48.30" width="8.4" height="0.6"/><rect x="6.0" y="52.60" width="8.9" height="0.6"/><rect x="6.0" y="56.90" width="4.5" height="0.6"/><rect x="6.0" y="61.20" width="8.2" height="0.6"/><rect x="6.0" y="65.50" width="8.5" height="0.6"/><rect x="6.0" y="69.80" width="6.1" height="0.6"/><rect x="6.0" y="74.10" width="7.4" height="0.6"/><rect x="6.0" y="78.40" width="9.0" height="0.6"/></g><rect x="18" y="2.4" width="6" height="0.7" fill="#D33"/><text x="17.6" y="8.6" font-family="Liberation Sans, sans-serif" font-weight="bold" font-size="4.6" textLength="35.6" lengthAdjust="spacingAndGlyphs" fill="#111">FORMREADER 6.5</text><rect x="17.6" y="13.2" width="44.4" height="1.5" fill="#2F9696"/><rect x="17.6" y="52.2" width="44.4" height="1.6" fill="#2F9696"/><g fill="#3a3a3a" opacity="0.72"><rect x="17.6" y="16.60" width="44.0" height="0.55"/><rect x="17.6" y="17.85" width="26.4" height="0.55"/></g><g fill="#3a3a3a" opacity="0.82"><rect x="17.6" y="21.40" width="19.0" height="0.55"/></g><g fill="#3a3a3a" opacity="0.67"><rect x="19.0" y="23.00" width="13.8" height="0.55"/><rect x="19.0" y="24.25" width="9.1" height="0.55"/><rect x="19.0" y="25.50" width="9.8" height="0.55"/><rect x="19.0" y="26.75" width="13.6" height="0.55"/></g><g fill="#3a3a3a" opacity="0.82"><rect x="17.6" y="30.40" width="22.0" height="0.55"/></g><g fill="#3a3a3a" opacity="0.72"><rect x="17.6" y="32.00" width="44.0" height="0.55"/><rect x="17.6" y="33.25" width="30.8" height="0.55"/></g><g fill="#3a3a3a" opacity="0.77"><rect x="17.6" y="36.00" width="44.0" height="0.55"/></g><g fill="#3a3a3a" opacity="0.67"><rect x="19.0" y="38.40" width="20.1" height="0.55"/><rect x="19.0" y="39.65" width="23.8" height="0.55"/><rect x="19.0" y="40.90" width="14.8" height="0.55"/><rect x="19.0" y="42.15" width="24.8" height="0.55"/><rect x="19.0" y="43.40" width="15.0" height="0.55"/></g><g fill="#3a3a3a" opacity="0.72"><rect x="17.6" y="46.00" width="44.0" height="0.55"/><rect x="17.6" y="47.25" width="44.0" height="0.55"/><rect x="17.6" y="48.50" width="13.2" height="0.55"/></g><g fill="#3a3a3a" opacity="0.77"><rect x="17.6" y="55.60" width="40.0" height="0.55"/></g><g fill="#3a3a3a" opacity="0.67"><rect x="19.0" y="57.00" width="11.5" height="0.55"/><rect x="19.0" y="58.25" width="10.7" height="0.55"/><rect x="19.0" y="59.50" width="10.2" height="0.55"/><rect x="19.0" y="60.75" width="6.6" height="0.55"/><rect x="19.0" y="62.00" width="9.0" height="0.55"/><rect x="19.0" y="63.25" width="7.7" height="0.55"/><rect x="19.0" y="64.50" width="7.2" height="0.55"/></g><g fill="#3a3a3a" opacity="0.72"><rect x="17.6" y="67.40" width="40.0" height="0.55"/><rect x="17.6" y="68.65" width="32.0" height="0.55"/></g><g fill="#3a3a3a" opacity="0.72"><rect x="17.6" y="71.20" width="40.0" height="0.55"/><rect x="17.6" y="72.45" width="40.0" height="0.55"/><rect x="17.6" y="73.70" width="20.0" height="0.55"/></g><g fill="#3a3a3a" opacity="0.67"><rect x="19.0" y="76.00" width="10.7" height="0.55"/><rect x="19.0" y="77.25" width="8.8" height="0.55"/><rect x="19.0" y="78.50" width="8.8" height="0.55"/><rect x="19.0" y="79.75" width="7.7" height="0.55"/><rect x="19.0" y="81.00" width="13.3" height="0.55"/><rect x="19.0" y="82.25" width="6.7" height="0.55"/><rect x="19.0" y="83.50" width="10.6" height="0.55"/><rect x="19.0" y="84.75" width="8.0" height="0.55"/></g><rect x="1.5" y="76.5" width="12.5" height="14" fill="#fff" stroke="#8E8E8E"/><g fill="#4a4a4a"><rect x="4.2" y="79.4" width="7.2" height="1.6"/><rect x="4.2" y="82.4" width="7.2" height="1"/><rect x="4.2" y="84.6" width="7.2" height="1"/><rect x="4.2" y="86.8" width="4" height="1"/></g></svg>
<svg style="left:23px;top:441px" width="66" height="92" viewBox="0 0 66 92"><rect x="0.5" y="0.5" width="65" height="90.6" fill="#fff" stroke="#A2A2A2"/><rect x="3.9" y="3.8" width="58" height="1.3" fill="#2F9696"/><rect x="3.9" y="54" width="58" height="1.3" fill="#2F9696"/><g fill="#3a3a3a" opacity="0.67"><rect x="3.9" y="6.20" width="54.9" height="0.55"/><rect x="3.9" y="7.45" width="50.4" height="0.55"/></g><g fill="#3a3a3a" opacity="0.72"><rect x="3.9" y="9.70" width="23.5" height="0.55"/><rect x="3.9" y="10.95" width="25.9" height="0.55"/><rect x="3.9" y="12.20" width="24.9" height="0.55"/><rect x="3.9" y="13.45" width="25.1" height="0.55"/><rect x="3.9" y="14.70" width="13.0" height="0.55"/></g><g fill="#3a3a3a" opacity="0.72"><rect x="3.9" y="17.00" width="25.8" height="0.55"/><rect x="3.9" y="18.25" width="23.3" height="0.55"/><rect x="3.9" y="19.50" width="25.4" height="0.55"/><rect x="3.9" y="20.75" width="24.2" height="0.55"/><rect x="3.9" y="22.00" width="23.4" height="0.55"/><rect x="3.9" y="23.25" width="22.9" height="0.55"/><rect x="3.9" y="24.50" width="13.0" height="0.55"/></g><g fill="#3a3a3a" opacity="0.72"><rect x="34.0" y="9.70" width="23.5" height="0.55"/><rect x="34.0" y="10.95" width="23.0" height="0.55"/><rect x="34.0" y="12.20" width="21.8" height="0.55"/><rect x="34.0" y="13.45" width="24.3" height="0.55"/><rect x="34.0" y="14.70" width="24.2" height="0.55"/><rect x="34.0" y="15.95" width="10.0" height="0.55"/></g><g fill="#3a3a3a" opacity="0.72"><rect x="34.0" y="19.00" width="24.0" height="0.55"/><rect x="34.0" y="20.25" width="23.2" height="0.55"/><rect x="34.0" y="21.50" width="24.7" height="0.55"/><rect x="34.0" y="22.75" width="23.7" height="0.55"/><rect x="34.0" y="24.00" width="24.7" height="0.55"/><rect x="34.0" y="25.25" width="25.0" height="0.55"/><rect x="34.0" y="26.50" width="23.9" height="0.55"/><rect x="34.0" y="27.75" width="24.6" height="0.55"/><rect x="34.0" y="29.00" width="10.0" height="0.55"/></g><g fill="#3a3a3a" opacity="0.62"><rect x="34.0" y="31.60" width="13.3" height="0.55"/><rect x="34.0" y="32.85" width="19.2" height="0.55"/><rect x="34.0" y="34.10" width="16.9" height="0.55"/><rect x="34.0" y="35.35" width="13.7" height="0.55"/><rect x="34.0" y="36.60" width="21.3" height="0.55"/><rect x="34.0" y="37.85" width="17.8" height="0.55"/><rect x="34.0" y="39.10" width="17.0" height="0.55"/><rect x="34.0" y="40.35" width="12.6" height="0.55"/><rect x="34.0" y="41.60" width="23.6" height="0.55"/><rect x="34.0" y="42.85" width="9.6" height="0.55"/></g><rect x="3.9" y="27.4" width="27.4" height="17.6" fill="#F1F4F5" stroke="#D5DCDF" stroke-width="0.4"/><rect x="7.4" y="28.6" width="23" height="14.6" fill="#5F8088"/><g fill="#C9D6D9"><rect x="8.8" y="30" width="9.4" height="2.2"/><rect x="19.6" y="30" width="9.4" height="2.2"/><rect x="8.8" y="33.4" width="9.4" height="2.2"/><rect x="19.6" y="33.4" width="9.4" height="2.2"/><rect x="8.8" y="38" width="9.4" height="3"/><rect x="19.6" y="38" width="9.4" height="3"/></g><g fill="#3a3a3a" opacity="0.72"><rect x="3.9" y="56.60" width="56.0" height="0.55"/></g><g fill="#8AA" opacity="0.5"><rect x="3.9" y="59.00" width="54.5" height="0.6"/><rect x="3.9" y="60.25" width="50.4" height="0.6"/></g><rect x="4.2" y="61.4" width="26.6" height="12.6" fill="#fff" stroke="#C5CED6" stroke-width="0.6"/><rect x="13" y="66.4" width="9" height="0.8" fill="#999"/><g fill="#3a3a3a" opacity="0.72"><rect x="34.0" y="63.60" width="21.5" height="0.55"/><rect x="34.0" y="64.85" width="18.8" height="0.55"/><rect x="34.0" y="66.10" width="21.1" height="0.55"/><rect x="34.0" y="67.35" width="16.2" height="0.55"/><rect x="34.0" y="68.60" width="18.1" height="0.55"/><rect x="34.0" y="69.85" width="11.0" height="0.55"/></g><rect x="3.9" y="75.2" width="27" height="0.9" fill="#9FC6C6"/><g fill="#3a3a3a" opacity="0.72"><rect x="34.0" y="75.40" width="21.6" height="0.55"/><rect x="34.0" y="76.65" width="22.7" height="0.55"/><rect x="34.0" y="77.90" width="20.9" height="0.55"/><rect x="34.0" y="79.15" width="12.0" height="0.55"/></g><rect x="15.6" y="78" width="15.4" height="10" fill="#fff" stroke="#D0D8E0" stroke-width="0.5"/><rect x="19" y="80.6" width="11" height="0.8" fill="#9BC"/><rect x="19" y="83" width="11" height="3.6" fill="#E8F0F6"/><rect x="1.5" y="76.5" width="12.5" height="14" fill="#fff" stroke="#8E8E8E"/><g fill="#4a4a4a"><rect x="4.2" y="79.4" width="7.2" height="1.6"/><rect x="4.2" y="82.4" width="7.2" height="1"/><rect x="4.2" y="84.6" width="7.2" height="1"/><rect x="4.2" y="86.8" width="4" height="1"/></g></svg>
<svg style="left:23px;top:576px" width="66" height="92" viewBox="0 0 66 92"><rect x="0.5" y="0.5" width="65" height="90.6" fill="#fff" stroke="#A2A2A2"/><rect x="3.9" y="5.2" width="57" height="1.3" fill="#2F9696"/><rect x="3.9" y="56" width="57" height="1.3" fill="#2F9696"/><g fill="#3a3a3a" opacity="0.72"><rect x="3.9" y="7.40" width="23.2" height="0.55"/><rect x="3.9" y="8.65" width="20.7" height="0.55"/><rect x="3.9" y="9.90" width="23.6" height="0.55"/><rect x="3.9" y="11.15" width="18.6" height="0.55"/><rect x="3.9" y="12.40" width="21.7" height="0.55"/><rect x="3.9" y="13.65" width="23.0" height="0.55"/><rect x="3.9" y="14.90" width="17.8" height="0.55"/><rect x="3.9" y="16.15" width="13.0" height="0.55"/></g><g fill="#3a3a3a" opacity="0.72"><rect x="3.9" y="19.40" width="21.5" height="0.55"/><rect x="3.9" y="20.65" width="20.9" height="0.55"/><rect x="3.9" y="21.90" width="18.6" height="0.55"/><rect x="3.9" y="23.15" width="23.1" height="0.55"/><rect x="3.9" y="24.40" width="23.1" height="0.55"/><rect x="3.9" y="25.65" width="19.7" height="0.55"/><rect x="3.9" y="26.90" width="13.0" height="0.55"/></g><g fill="#3a3a3a" opacity="0.72"><rect x="3.9" y="30.40" width="17.6" height="0.55"/><rect x="3.9" y="31.65" width="24.4" height="0.55"/><rect x="3.9" y="32.90" width="17.2" height="0.55"/><rect x="3.9" y="34.15" width="23.8" height="0.55"/><rect x="3.9" y="35.40" width="21.8" height="0.55"/><rect x="3.9" y="36.65" width="17.8" height="0.55"/><rect x="3.9" y="37.90" width="22.8" height="0.55"/><rect x="3.9" y="39.15" width="13.0" height="0.55"/></g><g fill="#3a3a3a" opacity="0.72"><rect x="3.9" y="42.40" width="21.9" height="0.55"/><rect x="3.9" y="43.65" width="23.3" height="0.55"/><rect x="3.9" y="44.90" width="17.7" height="0.55"/><rect x="3.9" y="46.15" width="21.6" height="0.55"/><rect x="3.9" y="47.40" width="25.2" height="0.55"/><rect x="3.9" y="48.65" width="19.2" height="0.55"/><rect x="3.9" y="49.90" width="25.3" height="0.55"/><rect x="3.9" y="51.15" width="13.0" height="0.55"/></g><g fill="#3a3a3a" opacity="0.72"><rect x="34.0" y="7.40" width="17.7" height="0.55"/><rect x="34.0" y="8.65" width="23.3" height="0.55"/><rect x="34.0" y="9.90" width="21.8" height="0.55"/><rect x="34.0" y="11.15" width="24.8" height="0.55"/><rect x="34.0" y="12.40" width="16.9" height="0.55"/><rect x="34.0" y="13.65" width="24.6" height="0.55"/><rect x="34.0" y="14.90" width="19.9" height="0.55"/><rect x="34.0" y="16.15" width="20.6" height="0.55"/><rect x="34.0" y="17.40" width="19.5" height="0.55"/><rect x="34.0" y="18.65" width="22.3" height="0.55"/><rect x="34.0" y="19.90" width="22.5" height="0.55"/><rect x="34.0" y="21.15" width="22.4" height="0.55"/><rect x="34.0" y="22.40" width="25.3" height="0.55"/><rect x="34.0" y="23.65" width="23.1" height="0.55"/><rect x="34.0" y="24.90" width="13.0" height="0.55"/></g><g fill="#3a3a3a" opacity="0.72"><rect x="34.0" y="27.40" width="23.1" height="0.55"/><rect x="34.0" y="28.65" width="20.4" height="0.55"/><rect x="34.0" y="29.90" width="25.9" height="0.55"/><rect x="34.0" y="31.15" width="17.1" height="0.55"/><rect x="34.0" y="32.40" width="18.5" height="0.55"/><rect x="34.0" y="33.65" width="16.9" height="0.55"/><rect x="34.0" y="34.90" width="23.6" height="0.55"/><rect x="34.0" y="36.15" width="24.2" height="0.55"/><rect x="34.0" y="37.40" width="25.5" height="0.55"/><rect x="34.0" y="38.65" width="13.0" height="0.55"/></g><g fill="#3a3a3a" opacity="0.72"><rect x="34.0" y="41.40" width="25.3" height="0.55"/><rect x="34.0" y="42.65" width="20.6" height="0.55"/><rect x="34.0" y="43.90" width="17.0" height="0.55"/><rect x="34.0" y="45.15" width="22.9" height="0.55"/><rect x="34.0" y="46.40" width="21.0" height="0.55"/><rect x="34.0" y="47.65" width="22.6" height="0.55"/><rect x="34.0" y="48.90" width="19.3" height="0.55"/><rect x="34.0" y="50.15" width="19.8" height="0.55"/><rect x="34.0" y="51.40" width="13.0" height="0.55"/></g><g fill="#3a3a3a" opacity="0.72"><rect x="3.9" y="58.60" width="46.0" height="0.55"/></g><g fill="#3a3a3a" opacity="0.72"><rect x="3.9" y="60.80" width="26.7" height="0.55"/><rect x="3.9" y="62.05" width="21.4" height="0.55"/><rect x="3.9" y="63.30" width="28.2" height="0.55"/><rect x="3.9" y="64.55" width="24.0" height="0.55"/></g><g fill="#3a3a3a" opacity="0.72"><rect x="3.9" y="67.00" width="33.0" height="0.55"/></g><rect x="3.9" y="68.4" width="29" height="17.4" fill="#EEF2F6" stroke="#B8C4D0" stroke-width="0.5"/><rect x="3.9" y="68.4" width="29" height="1.6" fill="#4A7AB0"/><rect x="3.9" y="70" width="29" height="2.4" fill="#DDE6EE"/><rect x="4.6" y="73" width="13" height="1.6" fill="#3A5E80"/><rect x="18.6" y="73.2" width="13.6" height="11.6" fill="#fff"/><rect x="4.6" y="82.6" width="27.6" height="2.6" fill="#B8CADB"/><g fill="#3a3a3a" opacity="0.72"><rect x="35.0" y="71.60" width="18.4" height="0.55"/><rect x="35.0" y="72.85" width="21.6" height="0.55"/><rect x="35.0" y="74.10" width="13.2" height="0.55"/></g><g fill="#3a3a3a" opacity="0.72"><rect x="35.0" y="76.40" width="20.4" height="0.55"/><rect x="35.0" y="77.65" width="19.5" height="0.55"/><rect x="35.0" y="78.90" width="20.3" height="0.55"/><rect x="35.0" y="80.15" width="20.0" height="0.55"/><rect x="35.0" y="81.40" width="12.6" height="0.55"/></g><rect x="1.5" y="76.5" width="12.5" height="14" fill="#fff" stroke="#8E8E8E"/><g fill="#4a4a4a"><rect x="4.2" y="79.4" width="7.2" height="1.6"/><rect x="4.2" y="82.4" width="7.2" height="1"/><rect x="4.2" y="84.6" width="7.2" height="1"/><rect x="4.2" y="86.8" width="4" height="1"/></g></svg>
<svg style="left:23px;top:711px" width="66" height="92" viewBox="0 0 66 92"><rect x="0.5" y="0.5" width="65" height="90.6" fill="#fff" stroke="#A2A2A2"/><rect x="3.9" y="3.2" width="58" height="1.3" fill="#2F9696"/><rect x="3.9" y="22.6" width="58" height="1.4" fill="#2F9696"/><g fill="#3a3a3a" opacity="0.67"><rect x="3.9" y="5.60" width="22.9" height="0.55"/><rect x="3.9" y="6.85" width="23.3" height="0.55"/><rect x="3.9" y="8.10" width="22.5" height="0.55"/><rect x="3.9" y="9.35" width="23.9" height="0.55"/><rect x="3.9" y="10.60" width="13.5" height="0.55"/></g><g fill="#3a3a3a" opacity="0.72"><rect x="3.9" y="12.60" width="26.6" height="0.55"/><rect x="3.9" y="13.85" width="25.7" height="0.55"/><rect x="3.9" y="15.10" width="25.6" height="0.55"/><rect x="3.9" y="16.35" width="24.4" height="0.55"/><rect x="3.9" y="17.60" width="24.8" height="0.55"/><rect x="3.9" y="18.85" width="24.9" height="0.55"/><rect x="3.9" y="20.10" width="24.3" height="0.55"/></g><g fill="#3a3a3a" opacity="0.72"><rect x="34.0" y="5.40" width="24.7" height="0.55"/><rect x="34.0" y="6.65" width="23.8" height="0.55"/><rect x="34.0" y="7.90" width="25.8" height="0.55"/><rect x="34.0" y="9.15" width="7.8" height="0.55"/></g><g fill="#3a3a3a" opacity="0.72"><rect x="34.0" y="10.60" width="24.1" height="0.55"/><rect x="34.0" y="11.85" width="23.6" height="0.55"/><rect x="34.0" y="13.10" width="25.9" height="0.55"/><rect x="34.0" y="14.35" width="7.8" height="0.55"/></g><g fill="#3a3a3a" opacity="0.72"><rect x="34.0" y="15.80" width="25.5" height="0.55"/><rect x="34.0" y="17.05" width="24.4" height="0.55"/><rect x="34.0" y="18.30" width="25.7" height="0.55"/><rect x="34.0" y="19.55" width="23.4" height="0.55"/></g><g fill="#3a3a3a" opacity="0.72"><rect x="3.9" y="25.40" width="24.4" height="0.55"/><rect x="3.9" y="26.65" width="15.6" height="0.55"/></g><g fill="#3a3a3a" opacity="0.72"><rect x="3.9" y="28.60" width="23.4" height="0.55"/><rect x="3.9" y="29.85" width="22.8" height="0.55"/><rect x="3.9" y="31.10" width="14.4" height="0.55"/></g><g fill="#3a3a3a" opacity="0.72"><rect x="3.9" y="34.00" width="19.2" height="0.55"/><rect x="3.9" y="35.25" width="18.3" height="0.55"/><rect x="3.9" y="36.50" width="18.3" height="0.55"/><rect x="3.9" y="37.75" width="13.2" height="0.55"/></g><g fill="#3a3a3a" opacity="0.72"><rect x="3.9" y="40.00" width="8.7" height="0.55"/><rect x="3.9" y="41.25" width="10.2" height="0.55"/><rect x="3.9" y="42.50" width="10.0" height="0.55"/><rect x="3.9" y="43.75" width="10.7" height="0.55"/><rect x="3.9" y="45.00" width="7.2" height="0.55"/></g><g fill="#3a3a3a" opacity="0.72"><rect x="3.9" y="47.60" width="21.7" height="0.55"/><rect x="3.9" y="48.85" width="25.0" height="0.55"/><rect x="3.9" y="50.10" width="23.8" height="0.55"/><rect x="3.9" y="51.35" width="15.6" height="0.55"/></g><g fill="#3a3a3a" opacity="0.72"><rect x="3.9" y="54.00" width="18.5" height="0.55"/><rect x="3.9" y="55.25" width="20.3" height="0.55"/><rect x="3.9" y="56.50" width="14.4" height="0.55"/></g><g fill="#3a3a3a" opacity="0.72"><rect x="34.0" y="25.40" width="12.4" height="0.55"/><rect x="34.0" y="26.65" width="11.2" height="0.55"/><rect x="34.0" y="27.90" width="7.8" height="0.55"/></g><g fill="#3a3a3a" opacity="0.72"><rect x="34.0" y="31.00" width="20.6" height="0.55"/><rect x="34.0" y="32.25" width="23.5" height="0.55"/><rect x="34.0" y="33.50" width="15.0" height="0.55"/></g><g fill="#3a3a3a" opacity="0.72"><rect x="34.0" y="36.60" width="9.6" height="0.55"/><rect x="34.0" y="37.85" width="8.2" height="0.55"/><rect x="34.0" y="39.10" width="9.5" height="0.55"/><rect x="34.0" y="40.35" width="7.9" height="0.55"/><rect x="34.0" y="41.60" width="8.2" height="0.55"/><rect x="34.0" y="42.85" width="8.8" height="0.55"/><rect x="34.0" y="44.10" width="6.0" height="0.55"/></g><g fill="#3a3a3a" opacity="0.72"><rect x="34.0" y="46.60" width="9.2" height="0.55"/><rect x="34.0" y="47.85" width="11.2" height="0.55"/><rect x="34.0" y="49.10" width="10.2" height="0.55"/><rect x="34.0" y="50.35" width="10.1" height="0.55"/><rect x="34.0" y="51.60" width="7.8" height="0.55"/></g><g fill="#3a3a3a" opacity="0.72"><rect x="34.0" y="53.60" width="17.1" height="0.55"/><rect x="34.0" y="54.85" width="17.7" height="0.55"/><rect x="34.0" y="56.10" width="14.4" height="0.55"/></g><g fill="#889" opacity="0.5"><rect x="13.6" y="78.40" width="5.9" height="0.6"/><rect x="13.6" y="79.65" width="4.8" height="0.6"/><rect x="13.6" y="80.90" width="4.8" height="0.6"/><rect x="13.6" y="82.15" width="4.4" height="0.6"/><rect x="13.6" y="83.40" width="4.0" height="0.6"/></g><rect x="13.6" y="85.2" width="4.6" height="0.6" fill="#77C" opacity="0.6"/><g fill="#889" opacity="0.5"><rect x="24.6" y="78.40" width="4.7" height="0.6"/><rect x="24.6" y="79.65" width="4.4" height="0.6"/><rect x="24.6" y="80.90" width="6.1" height="0.6"/><rect x="24.6" y="82.15" width="4.0" height="0.6"/><rect x="24.6" y="83.40" width="4.0" height="0.6"/></g><rect x="24.6" y="85.2" width="4.6" height="0.6" fill="#77C" opacity="0.6"/><g fill="#889" opacity="0.5"><rect x="36.6" y="78.40" width="5.7" height="0.6"/><rect x="36.6" y="79.65" width="4.0" height="0.6"/><rect x="36.6" y="80.90" width="4.1" height="0.6"/><rect x="36.6" y="82.15" width="4.2" height="0.6"/><rect x="36.6" y="83.40" width="4.0" height="0.6"/></g><rect x="36.6" y="85.2" width="4.6" height="0.6" fill="#77C" opacity="0.6"/><g fill="#889" opacity="0.5"><rect x="49.4" y="78.40" width="6.4" height="0.6"/><rect x="49.4" y="79.65" width="5.5" height="0.6"/><rect x="49.4" y="80.90" width="6.3" height="0.6"/><rect x="49.4" y="82.15" width="4.6" height="0.6"/><rect x="49.4" y="83.40" width="4.0" height="0.6"/></g><rect x="49.4" y="85.2" width="4.6" height="0.6" fill="#77C" opacity="0.6"/><rect x="1.5" y="76.5" width="12.5" height="14" fill="#fff" stroke="#8E8E8E"/><g fill="#4a4a4a"><rect x="4.2" y="79.4" width="7.2" height="1.6"/><rect x="4.2" y="82.4" width="7.2" height="1"/><rect x="4.2" y="84.6" width="7.2" height="1"/><rect x="4.2" y="86.8" width="4" height="1"/></g></svg>
<span class="t " style="left:52.60px;top:269.00px;font-size:12.5px;line-height:14px;color:#111;transform:scaleX(0.9493);">1</span>
<span class="t " style="left:52.60px;top:404.00px;font-size:12.5px;line-height:14px;color:#111;transform:scaleX(0.9493);">2</span>
<span class="t " style="left:52.60px;top:539.00px;font-size:12.5px;line-height:14px;color:#111;transform:scaleX(0.9493);">3</span>
<span class="t " style="left:52.60px;top:674.00px;font-size:12.5px;line-height:14px;color:#111;transform:scaleX(0.9493);">4</span>
<span class="t " style="left:52.60px;top:809.40px;font-size:12.5px;line-height:14px;color:#111;transform:scaleX(0.9493);">5</span>
<div class="b " style="left:120px;top:166px;width:917px;height:700px;background:#8C8C8C;"></div>
<div class="b " style="left:336px;top:174px;width:485px;height:684px;background:#fff;border-right:1px solid #DADADA;border-bottom:1px solid #DADADA;"></div>
<div class="doc" style="left:336px;top:174px;"><div class="ttl" style="left:224.9px;top:90.0px;transform:scaleX(1.0547);">MYSTERIES OF WATER AND LIFE</div>
<div class="q1" style="right:97.3px;top:134.4px;">Water is the driving force of all nature.</div>
<div class="q2" style="right:97.3px;top:151.5px;">Leonardo da Vinci</div>
<div class="dc" style="left:114.8px;top:195.4px;">W</div>
<div class="ln " style="left:153.4px;top:202.4px;word-spacing:-0.034px;">ater is one of the most unique and mysterious substances on Earth. Its nature is still</div>
<div class="ln " style="left:155.1px;top:219.3px;word-spacing:1.152px;">beyond the reach of contemporary science. At first glance, water is simple, and in</div>
<div class="ln " style="left:114.8px;top:236.2px;word-spacing:1.622px;">fact it was long considered to be a pure element. It was not until the <b class="bl">XVIII</b> century that</div>
<div class="ln " style="left:114.8px;top:253.0px;word-spacing:2.201px;">scientists proved that water is not a simple element but a compound of hydrogen and</div>
<div class="ln " style="left:114.8px;top:269.9px;word-spacing:0.831px;">oxygen. Following that discovery, hydrogen was given its name (<b class="hg">hydro genes</b> translates</div>
<div class="ln " style="left:114.8px;top:286.8px;">from Greek as “water-creating”).</div>
<div class="ln " style="left:235.1px;top:321.6px;word-spacing:0.193px;">Further research showed that a seemingly plain formula <b class="bl">H<sub>2</sub>O</b> describes</div>
<div class="ln " style="left:235.1px;top:338.4px;word-spacing:1.838px;">a substance of unique structure and properties. The secrets of water</div>
<div class="ln " style="left:235.1px;top:355.3px;word-spacing:-0.062px;">have defied scientists for more than two centuries. Even today scholars</div>
<div class="ln " style="left:235.1px;top:372.1px;word-spacing:1.784px;">are aware that water’s properties are elusive and abnormal, they are</div>
<div class="ln " style="left:235.1px;top:389.0px;word-spacing:1.518px;">not bound by the laws of physics which govern all other things in the</div>
<div class="ln " style="left:235.1px;top:405.8px;word-spacing:4.837px;">Universe. Here are just a few of the properties of this life-giving</div>
<div class="ln " style="left:235.1px;top:422.7px;">substance:</div>
<div class="bu" style="left:125.6px;top:465.5px;"></div>
<div class="ln " style="left:144.3px;top:462.2px;word-spacing:1.339px;">Water’s thermal capacity is <b class="bl">3,100</b> times greater than that of air and <b class="bl">4</b> times greater</div>
<div class="ln " style="left:144.3px;top:479.1px;word-spacing:2.900px;">than that of rock. Water regulates heat exchange in the human body and allows</div>
<div class="ln " style="left:144.3px;top:495.9px;word-spacing:2.377px;">people to stay comfortable and save energy. With its extraordinary ability to store</div>
<div class="ln " style="left:144.3px;top:512.8px;word-spacing:0.782px;">heat, water helps the human body, which is two-thirds</div>
<div class="ln " style="left:144.3px;top:529.6px;word-spacing:0.857px;">water, to maintain its normal temperature in scorching</div>
<div class="ln " style="left:144.3px;top:546.5px;">heat and biting frost.</div>
<div class="bu" style="left:125.6px;top:589.1px;"></div>
<div class="ln " style="left:144.3px;top:585.8px;word-spacing:5.059px;">Water is hard to freeze, and ice is slow to melt.</div>
<div class="ln " style="left:144.3px;top:602.6px;word-spacing:1.421px;">Thanks to this, the Earth’s climate is stable and mild,</div>
<div class="ln " style="left:144.3px;top:619.3px;word-spacing:10.222px;">and man can live and prosper in a friendly</div>
<div class="ln " style="left:144.3px;top:636.1px;">environment.</div>
<div class="bu" style="left:125.6px;top:678.8px;"></div>
<div class="ln " style="left:144.3px;top:675.5px;word-spacing:3.089px;">The freezing of water is accompanied by an abrupt</div>
<div class="ln " style="left:144.3px;top:692.3px;word-spacing:3.018px;">decrease in density by more than <b class="bl">8</b> per cent, while</div>
<div class="ln " style="left:144.3px;top:709.1px;word-spacing:10.369px;">most other substances get denser when they</div>
<div class="ln " style="left:144.3px;top:725.9px;word-spacing:2.607px;">crystallize. For this reason ice occupies more space</div>
<div class="ln " style="left:144.3px;top:742.7px;word-spacing:0.658px;">than liquid water and does not sink. This change in density is unique to water and is</div>
<div class="ln " style="left:144.3px;top:759.4px;word-spacing:0.416px;">crucial for all life on Earth. Ice that forms on the surface of bodies of water serves as</div>
<div class="ln " style="left:144.3px;top:776.2px;word-spacing:5.310px;">a floating blanket which saves rivers and lakes from freezing completely and</div>
<div class="ln " style="left:144.3px;top:793.0px;word-spacing:0.199px;">underwater life from dying. If ice were heavier than water, it would sink to the bottom,</div>
<div class="ln " style="left:144.3px;top:809.8px;word-spacing:0.928px;">and all living creatures in rivers, lakes, seas, and oceans would freeze and die. The</div>
<div class="ln " style="left:144.3px;top:826.6px;">whole Earth would eventually turn into a frozen wasteland.</div>
<div class="h2" style="left:114.8px;top:864.3px;transform:scaleX(1.1046);">Earth’s water resources:</div>
<div class="tbl" style="left:117.4px;top:903.6px;width:240.3px;height:129.5px;"><div class="tr" style="top:0.0px;height:25.9px;"><span class="tc" style="left:7px;">Seas and oceans</span><span class="tc" style="left:127.7px;">1.4 bn km<sup>3</sup></span></div><div class="tr" style="top:25.9px;height:25.9px;"><span class="tc" style="left:7px;">Glaciers</span><span class="tc" style="left:127.7px;">30m km<sup>3</sup></span></div><div class="tr" style="top:51.8px;height:25.9px;"><span class="tc" style="left:7px;">Rivers and lakes</span><span class="tc" style="left:127.7px;">2m km<sup>3</sup></span></div><div class="tr" style="top:77.7px;height:25.9px;"><span class="tc" style="left:7px;">Atmosphere</span><span class="tc" style="left:127.7px;">14,000 km<sup>3</sup></span></div><div class="tr" style="top:103.6px;height:25.9px;"><span class="tc" style="left:7px;">Living organisms</span><span class="tc" style="left:127.7px;">65%</span></div><div class="tv" style="left:120.7px;"></div></div>
<div class="ln " style="left:376.4px;top:897.0px;word-spacing:5.384px;">Water’s unique properties and its role in the</div>
<div class="ln " style="left:370.5px;top:913.8px;word-spacing:1.641px;">survival of all life on Earth have been a constant</div>
<div class="ln " style="left:370.5px;top:930.7px;word-spacing:3.782px;">challenge to scientists. The study of water has</div>
<div class="ln " style="left:370.5px;top:947.5px;word-spacing:3.740px;">revealed new facts about the world around us.</div>
<div class="ln " style="left:370.5px;top:964.3px;word-spacing:0.519px;">These new ideas help us to better understand the</div>
<div class="ln " style="left:370.5px;top:981.2px;word-spacing:5.025px;">properties of water and the peculiarities of its</div>
<div class="ln " style="left:370.5px;top:998.0px;">interaction with other substances.</div>
<svg style="left:114.9px;top:329.5px" width="108" height="108" viewBox="0 0 66 66">
<defs><radialGradient id="mo" cx="0.42" cy="0.52" r="0.62"><stop offset="0" stop-color="#7FE0FF"/><stop offset="0.25" stop-color="#35BDF0"/><stop offset="0.8" stop-color="#1C97DA"/><stop offset="1" stop-color="#1877C4"/></radialGradient>
<radialGradient id="mh" cx="0.4" cy="0.4" r="0.7"><stop offset="0" stop-color="#B0223A"/><stop offset="0.6" stop-color="#8C1226"/><stop offset="1" stop-color="#5A0A18"/></radialGradient><filter id="mb"><feGaussianBlur stdDeviation="0.35"/></filter></defs>
<rect width="66" height="66" fill="#1D4FA5"/>
<g filter="url(#mb)"><circle cx="32" cy="19.7" r="7.6" fill="url(#mh)"/><circle cx="30.5" cy="34.4" r="14.8" fill="url(#mo)"/><circle cx="45" cy="41.8" r="7.2" fill="url(#mh)"/>
<path d="M31.2 6.5 L31.2 32.6 L55 49" fill="none" stroke="#E8F4FF" stroke-width="0.45" opacity="0.85"/></g>
<g font-family="Liberation Sans, sans-serif" fill="#DCEBFA"><text x="33.8" y="8.8" font-size="4.2">H</text><text x="55.6" y="46.6" font-size="4.2" opacity="0.8">H</text><text x="23.6" y="33.4" font-size="7.4" opacity="0.85">O</text><text x="39.4" y="32.8" font-size="4" opacity="0.7">105°</text><text x="20.6" y="55" font-size="2.6" opacity="0.6">молекула воды</text></g>
</svg>
<svg style="left:510.0px;top:516.4px" width="186.7" height="214.1" viewBox="0 0 114 130.6" preserveAspectRatio="none">
<defs>
<filter id="pb" x="-10%" y="-10%" width="120%" height="120%" color-interpolation-filters="sRGB"><feGaussianBlur stdDeviation="1.1"/></filter>
<filter id="pb2" x="-20%" y="-10%" width="140%" height="120%" color-interpolation-filters="sRGB"><feGaussianBlur stdDeviation="1.0"/></filter>
<filter id="pnd" x="0" y="0" width="100%" height="100%" color-interpolation-filters="sRGB"><feTurbulence type="fractalNoise" baseFrequency="0.42" numOctaves="3" seed="11"/><feColorMatrix values="0 0 0 0 0.08  0 0 0 0 0.10  0 0 0 0 0.04  2.6 2.6 0 0 -2.3"/></filter>
<filter id="pnl" x="0" y="0" width="100%" height="100%" color-interpolation-filters="sRGB"><feTurbulence type="fractalNoise" baseFrequency="0.5" numOctaves="3" seed="5"/><feColorMatrix values="0 0 0 0 0.50  0 0 0 0 0.62  0 0 0 0 0.24  3 0 3 0 -2.7"/></filter>
<clipPath id="pc"><rect width="114" height="130.6"/></clipPath>
<clipPath id="pcu"><path d="M0 0 H114 V19 H60 L30 17 L12 19 L0 24Z M46 36 C54 28 74 25 90 31 L92 62 L44 62Z M0 66 H30 V80 H0Z M60 66 H82 V82 H60Z M90 44 H114 V72 H92Z"/></clipPath>
</defs>
<g clip-path="url(#pc)"><rect width="114" height="130.6" fill="#2C3218"/>
<g filter="url(#pb)">
<rect x="-4" y="-4" width="122" height="34" fill="#384C1E"/>
<path d="M46 -3 L104 -3 L100 8 L92 12 L78 10 L64 13 L52 8Z" fill="#CBD6C6"/>
<path d="M56 -2 L57 13 M65 -2 L65 10 M74 -2 L75 13 M86 -2 L87 15 M96 -2 L97 12 M104 -2 L103 16 M60 6 L100 8" stroke="#3A4822" stroke-width="2.8" fill="none"/>
<path d="M-4 -4 L28 -4 L36 8 L22 17 L-4 20Z" fill="#4A6C26"/>
<path d="M8 2 L20 -2 L26 9 L12 12Z" fill="#62882E"/>
<path d="M30 4 L46 2 L50 14 L34 16Z" fill="#40601F"/>
<path d="M104 -4 L118 -4 L118 30 L108 22Z" fill="#40601F"/>
<path d="M10 9 L58 16 M12 15 L42 20" stroke="#866436" stroke-width="1.3" fill="none" opacity="0.8"/>
<path d="M42 36 C50 27 72 23 90 30 L92 62 L74 66 L56 64 L42 60Z" fill="#466A28"/>
<path d="M52 36 C60 30 70 30 78 38 L80 54 L58 58Z" fill="#5A8234"/>
<path d="M58 40 C62 37 68 39 70 45 L68 52 L60 52Z" fill="#6E983E"/>
<path d="M76 31 L91 31 L93 44 L81 46Z" fill="#7E902C"/>
<path d="M44 48 L90 48 L90 67 L44 67Z" fill="#2C3C1A" opacity="0.85"/>
<path d="M12 17 C30 13 50 17 62 19 C78 18 96 19 118 21 L118 34 C104 32 96 32 91 30 C80 24 66 23.5 58 28 C50 32 46 38 44 47 L38 42 L30 30 L10 26Z" fill="#1C2010"/>
<path d="M-4 24 L30 24 L44 42 L43 65 L22 71 L-4 73Z" fill="#242C14"/>
<path d="M0 30 L24 29 L32 38 L8 42Z" fill="#364620"/>
<path d="M6 46 L30 44 L36 58 L10 62Z" fill="#2B3618"/>
<path d="M88 42 C98 37 110 39 118 45 L118 104 L92 104 L87 80Z" fill="#2F3C18"/>
<path d="M93 50 C100 46 108 48 114 54 L114 70 L95 72Z" fill="#425220"/>
<path d="M94 24 L118 26 L118 46 L99 42Z" fill="#242E13"/>
<path d="M34 66 C42 63 54 63 62 66 L60 73 L40 74Z" fill="#7E7868"/>
<path d="M1 72 C7 65 22 63 29 69 L30 78 L20 82 L2 82Z" fill="#6E8232"/>
<path d="M25 73 C29 70 35 70 38 73 L34 79 L27 79Z" fill="#5C7A2A"/>
<path d="M60 68 C66 64 76 64 81 70 L83 84 L62 86Z" fill="#6A8236"/>
<path d="M37 76 C42 71 52 71 56 77 L54 88 L38 88Z" fill="#466226"/>
<rect x="-4" y="84" width="122" height="26" fill="#1A1C13"/>
<path d="M30 86 C36 80 50 80 54 88 L54 104 L32 104Z" fill="#323C1F"/>
<path d="M61 86 C68 81 80 82 83 90 L84 106 L61 106Z" fill="#262A19"/>
<path d="M2 84 L18 84 L16 104 L0 104Z" fill="#242619"/>
<rect x="-4" y="105" width="122" height="30" fill="#5E5A4E"/>
<path d="M-4 116 L50 122 L118 116 L118 135 L-4 135Z" fill="#44423A"/>
<path d="M-4 125 L118 123 L118 135 L-4 135Z" fill="#302F29"/>
</g>
<g clip-path="url(#pcu)"><rect width="114" height="84" filter="url(#pnl)" opacity="0.5"/></g>
<rect width="114" height="106" filter="url(#pnd)" opacity="0.6"/>
<g filter="url(#pb2)" opacity="0.9">
<path d="M47 0 L56 0 L55 8 L50 6Z M59 0 L64 0 L64 9 L59 11Z M67 0 L73 0 L73 10 L68 9Z M77 0 L85 0 L85 12 L78 10Z M89 0 L95 0 L95 9 L90 12Z M98 0 L103 0 L101 8 L99 8Z" fill="#E4ECE2"/>
</g>
<g filter="url(#pb2)">
<path d="M23.4 78 C21.6 86 19 96 17 107 L23.4 107 C23.6 98 24.4 88 25.6 80 C26.4 88 26.4 98 26.2 107 L30 107 C29.8 96 29.8 86 30.4 79 C28 77 25.4 77 23.4 78Z" fill="#F0F2F2" opacity="0.95"/>
<path d="M22.6 90 L17 107 L30 107 L29.8 92Z" fill="#E4E8E8" opacity="0.55"/>
<path d="M55.4 69 C54.8 84 53.4 98 51.6 112 L61.8 112 C60.4 98 59.4 82 59.4 70Z" fill="#F4F6F6" opacity="0.97"/>
<path d="M82.8 72 C84 84 85.2 96 85.8 107 L93.4 107 C91.6 96 89.4 84 86.6 73Z" fill="#ECEEEE" opacity="0.92"/>
<path d="M40 67 C46 65.4 52 65.6 56 67.6 L55 71 L44 71.6Z" fill="#D8DCD8" opacity="0.5"/>
<path d="M-2 108 C6 105.6 22 105.6 30 108.4 C28 112 8 113.4 -2 112Z" fill="#F4F4F2" opacity="0.95"/>
<path d="M44 117 C46 111 66 110 70 116 C72 122 62 125.4 56 125 C50 124.6 44 122 44 117Z" fill="#F2F2F0" opacity="0.85"/>
<ellipse cx="56.6" cy="112" rx="6.4" ry="3" fill="#fff" opacity="0.9"/>
<path d="M78 110.6 C84 107 100 107 107 110.4 C104 114.4 84 114.8 78 110.6Z" fill="#F0F0EE" opacity="0.9"/>
<ellipse cx="107" cy="121.6" rx="8" ry="1.7" fill="#E8E8E4" opacity="0.75"/>
<ellipse cx="30" cy="120" rx="16" ry="2.2" fill="#A8A8A0" opacity="0.4"/>
<ellipse cx="84" cy="119" rx="12" ry="1.8" fill="#A8A8A0" opacity="0.4"/>
</g></g></svg></div>
<svg style="left:0;top:0" width="1333" height="922" viewBox="0 0 1333 922"><g stroke="#0808D0" stroke-width="1.1" opacity="0.3" fill="none"><path d="M391.5 280.1 L773.8 256.1"/><path d="M391.0 328.2 L774.7 308.2"/><path d="M390.5 376.2 L775.5 360.4"/><path d="M390.0 424.3 L776.3 412.5"/><path d="M389.5 472.4 L777.2 464.6"/><path d="M389.0 520.5 L778.0 516.8"/><path d="M388.5 568.6 L778.8 568.9"/><path d="M388.0 616.7 L779.7 621.0"/><path d="M387.5 664.8 L780.5 673.1"/><path d="M387.0 712.8 L781.3 725.2"/><path d="M386.5 760.9 L782.2 777.4"/><path d="M446.4 228.0 L442.7 811.9"/><path d="M500.9 224.0 L499.4 814.9"/><path d="M555.3 220.0 L556.1 817.8"/><path d="M609.7 216.0 L612.9 820.7"/><path d="M664.1 212.0 L669.6 823.6"/><path d="M718.6 208.0 L726.3 826.6"/></g><path d="M392 232 L773 204 L783 829.5 L386 809Z" fill="none" stroke="#1212C8" stroke-width="2.2"/><rect x="388.5" y="228.5" width="7" height="7" fill="#fff" stroke="#00007A" stroke-width="1"/><rect x="769.5" y="200.5" width="7" height="7" fill="#fff" stroke="#00007A" stroke-width="1"/><rect x="779.5" y="826.0" width="7" height="7" fill="#fff" stroke="#00007A" stroke-width="1"/><rect x="382.5" y="805.5" width="7" height="7" fill="#fff" stroke="#00007A" stroke-width="1"/></svg>
<div class="b " style="left:1037px;top:166px;width:17px;height:700px;background:#F0F0F0;"></div>
<div class="b " style="left:1038px;top:191px;width:15px;height:126px;background:#CDCDCD;"></div>
<svg style="left:1041px;top:173px" width="10" height="7" viewBox="0 0 10 7"><path d="M1 5.6 L5 1.4 L9 5.6" fill="none" stroke="#505050" stroke-width="1.8"/></svg>
<svg style="left:1041px;top:853px" width="10" height="7" viewBox="0 0 10 7"><path d="M1 1.4 L5 5.6 L9 1.4" fill="none" stroke="#505050" stroke-width="1.8"/></svg>
<div class="b " style="left:1054px;top:166px;width:271px;height:723px;background:#F0F0F0;border-left:1px solid #9C9C9C;"></div>
<div class="b " style="left:1055px;top:166px;width:270px;height:27px;background:#F7F7F7;border:1px solid #ABABAB;border-left:none;"></div>
<span class="t " style="left:1086.30px;top:174.00px;font-size:11.9px;line-height:14px;color:#111;font-weight:bold;transform:scaleX(0.9773);"><u>R</u>ecommended Preprocessing</span>
<div class="b " style="left:1055px;top:192px;width:270px;height:27px;background:#F7F7F7;border:1px solid #ABABAB;border-left:none;"></div>
<span class="t " style="left:1086.30px;top:200.00px;font-size:11.9px;line-height:14px;color:#111;font-weight:bold;transform:scaleX(0.9927);">Deske<u>w</u></span>
<div class="b " style="left:1055px;top:218px;width:270px;height:27px;background:#F7F7F7;border:1px solid #ABABAB;border-left:none;"></div>
<span class="t " style="left:1086.30px;top:226.00px;font-size:11.9px;line-height:14px;color:#111;font-weight:bold;transform:scaleX(1.0048);">Straighten Te<u>x</u>t Lines</span>
<div class="b " style="left:1055px;top:244px;width:270px;height:27px;background:#F7F7F7;border:1px solid #ABABAB;border-left:none;"></div>
<span class="t " style="left:1086.30px;top:252.00px;font-size:11.9px;line-height:14px;color:#111;font-weight:bold;transform:scaleX(0.9724);"><u>P</u>hoto Correction</span>
<div class="b " style="left:1055px;top:270px;width:270px;height:27px;background:#F7F7F7;border:1px solid #ABABAB;border-left:none;"></div>
<span class="t " style="left:1086.30px;top:278.00px;font-size:11.9px;line-height:14px;color:#111;font-weight:bold;transform:scaleX(0.9940);">Correct Trape<u>z</u>oid Distortion</span>
<div class="b " style="left:1055px;top:463px;width:270px;height:27px;background:#F7F7F7;border:1px solid #ABABAB;border-left:none;"></div>
<span class="t " style="left:1086.30px;top:470.80px;font-size:11.9px;line-height:14px;color:#111;font-weight:bold;transform:scaleX(0.9934);">Rot<u>a</u>te &amp; Flip</span>
<div class="b " style="left:1055px;top:489px;width:270px;height:27px;background:#F7F7F7;border:1px solid #ABABAB;border-left:none;"></div>
<span class="t " style="left:1086.30px;top:496.70px;font-size:11.9px;line-height:14px;color:#111;font-weight:bold;transform:scaleX(0.9658);">Spl<u>i</u>t</span>
<div class="b " style="left:1055px;top:515px;width:270px;height:27px;background:#F7F7F7;border:1px solid #ABABAB;border-left:none;"></div>
<span class="t " style="left:1086.30px;top:522.60px;font-size:11.9px;line-height:14px;color:#111;font-weight:bold;transform:scaleX(0.9257);">Cr<u>o</u>p</span>
<div class="b " style="left:1055px;top:541px;width:270px;height:27px;background:#F7F7F7;border:1px solid #ABABAB;border-left:none;"></div>
<span class="t " style="left:1086.30px;top:548.60px;font-size:11.9px;line-height:14px;color:#111;font-weight:bold;transform:scaleX(1.1016);">In<u>v</u>ert</span>
<div class="b " style="left:1055px;top:567px;width:270px;height:27px;background:#F7F7F7;border:1px solid #ABABAB;border-left:none;"></div>
<span class="t " style="left:1086.30px;top:574.60px;font-size:11.9px;line-height:14px;color:#111;font-weight:bold;transform:scaleX(0.9710);">Resol<u>u</u>tion</span>
<div class="b " style="left:1055px;top:593px;width:270px;height:27px;background:#F7F7F7;border:1px solid #ABABAB;border-left:none;"></div>
<span class="t " style="left:1086.30px;top:600.60px;font-size:11.9px;line-height:14px;color:#111;font-weight:bold;transform:scaleX(0.9795);">Brightness &amp; <u>C</u>ontrast</span>
<div class="b " style="left:1055px;top:619px;width:270px;height:27px;background:#F7F7F7;border:1px solid #ABABAB;border-left:none;"></div>
<span class="t " style="left:1086.30px;top:626.70px;font-size:11.9px;line-height:14px;color:#111;font-weight:bold;transform:scaleX(0.9636);"><u>L</u>evels</span>
<div class="b " style="left:1055px;top:645px;width:270px;height:27px;background:#F7F7F7;border:1px solid #ABABAB;border-left:none;"></div>
<span class="t " style="left:1086.30px;top:652.70px;font-size:11.9px;line-height:14px;color:#111;font-weight:bold;transform:scaleX(0.9634);">Era<u>s</u>er</span>
<div class="b " style="left:1055px;top:671px;width:270px;height:27px;background:#F7F7F7;border:1px solid #ABABAB;border-left:none;"></div>
<span class="t " style="left:1086.30px;top:678.80px;font-size:11.9px;line-height:14px;color:#111;font-weight:bold;transform:scaleX(0.9858);">Remove Color <u>M</u>arks</span>
<span class="t " style="left:1084.50px;top:307.10px;font-size:12.2px;line-height:14px;color:#1a1a1a;transform:scaleX(0.9027);">Align the grid with the text lines by</span>
<span class="t " style="left:1084.50px;top:320.40px;font-size:12.2px;line-height:14px;color:#1a1a1a;transform:scaleX(0.9007);">dragging each corner of the frame onto the</span>
<span class="t " style="left:1084.50px;top:333.70px;font-size:12.2px;line-height:14px;color:#1a1a1a;transform:scaleX(0.9056);">corresponding corner of the paper.</span>
<span class="t " style="left:1084.50px;top:366.00px;font-size:12.2px;line-height:14px;color:#1a1a1a;transform:scaleX(0.8925);">Gri<u>d</u> type:</span>
<span class="t " style="left:1084.50px;top:398.60px;font-size:12.2px;line-height:14px;color:#1a1a1a;transform:scaleX(0.8604);">Selec<u>t</u>ion:</span>
<div class="b " style="left:1138px;top:362px;width:158px;height:21px;background:linear-gradient(#F3F3F3,#E6E6E6);border:1px solid #A8A8A8;"><svg style="right:5px;top:7px" width="9" height="7" viewBox="0 0 9 7"><path d="M0.8 1 L4.5 5.2 L8.2 1" fill="none" stroke="#3A3A3A" stroke-width="1.8"/></svg></div>
<span class="t " style="left:1140.80px;top:366.20px;font-size:12.2px;line-height:14px;color:#1a1a1a;transform:scaleX(0.8784);">User-defined grid</span>
<div class="b " style="left:1138px;top:395px;width:158px;height:21px;background:#EFEFEF;border:1px solid #D6D6D6;"><svg style="right:5px;top:7px" width="9" height="7" viewBox="0 0 9 7"><path d="M0.8 1 L4.5 5.2 L8.2 1" fill="none" stroke="#C4C4C4" stroke-width="1.8"/></svg></div>
<span class="t " style="left:1140.80px;top:398.80px;font-size:12.2px;line-height:14px;color:#8E8E8E;transform:scaleX(0.8709);">Current Page</span>
<div class="b " style="left:1086px;top:425px;width:210px;height:27px;background:linear-gradient(#F2F2F2,#E3E3E3);border:1px solid #ACACAC;"></div>
<span class="t " style="left:1114.80px;top:432.60px;font-size:12.2px;line-height:14px;color:#1a1a1a;transform:scaleX(0.8926);"><u>C</u>orrect</span>
<div class="b " style="left:1055px;top:848px;width:270px;height:1px;background:#A0A0A0;"></div>
<div class="b " style="left:1066px;top:860px;width:13px;height:13px;background:#fff;border:1px solid #6E6E6E;"></div>
<span class="t " style="left:1082.00px;top:860.20px;font-size:12.2px;line-height:14px;color:#1a1a1a;transform:scaleX(0.8952);">Show next pa<u>g</u>e after operation completes</span>
<svg style="left:0;top:0" width="1333" height="922" viewBox="0 0 1333 922"><path d="M1068.5 171.5 L1075.5 171.5 L1075.5 178.5 M1065 188.5 L1058.5 188.5 L1058.5 181.5" fill="none" stroke="#B4B4B4" stroke-width="1.3"/><polygon points="1067.68,176.32 1069.44,176.47 1069.44,178.13 1067.68,178.28 1067.18,179.49 1068.32,180.84 1067.14,182.02 1065.79,180.88 1064.58,181.38 1064.43,183.14 1062.77,183.14 1062.62,181.38 1061.41,180.88 1060.06,182.02 1058.88,180.84 1060.02,179.49 1059.52,178.28 1057.76,178.13 1057.76,176.47 1059.52,176.32 1060.02,175.11 1058.88,173.76 1060.06,172.58 1061.41,173.72 1062.62,173.22 1062.77,171.46 1064.43,171.46 1064.58,173.22 1065.79,173.72 1067.14,172.58 1068.32,173.76 1067.18,175.11" fill="#2F6DA6"/><circle cx="1063.6" cy="177.3" r="1.9" fill="#F7F7F7"/><polygon points="1075.02,183.92 1076.26,184.02 1076.26,185.18 1075.02,185.28 1074.67,186.12 1075.48,187.06 1074.66,187.88 1073.72,187.07 1072.88,187.42 1072.78,188.66 1071.62,188.66 1071.52,187.42 1070.68,187.07 1069.74,187.88 1068.92,187.06 1069.73,186.12 1069.38,185.28 1068.14,185.18 1068.14,184.02 1069.38,183.92 1069.73,183.08 1068.92,182.14 1069.74,181.32 1070.68,182.13 1071.52,181.78 1071.62,180.54 1072.78,180.54 1072.88,181.78 1073.72,182.13 1074.66,181.32 1075.48,182.14 1074.67,183.08" fill="#E07820"/><circle cx="1072.2" cy="184.6" r="1.2" fill="#F7F7F7"/><g transform="rotate(-17 1067.2 206)"><rect x="1060.6" y="202" width="13.2" height="8.2" fill="#F7F7F7" stroke="#5E5E5E" stroke-width="2"/></g><path d="M1060.4 202.6 L1060.4 198.4 M1058.4 200.2 L1060.4 198 L1062.4 200.2 M1073.6 210 L1073.6 214 M1071.6 212.2 L1073.6 214.4 L1075.6 212.2" fill="none" stroke="#2F6DA6" stroke-width="1.3"/><path d="M1058.6 227.6 C1063.6 223.6 1070.6 223.6 1075.6 227.6 M1059.6 231.4 C1064.2 228 1070 228 1074.6 231.4" fill="none" stroke="#5E5E5E" stroke-width="1.9"/><path d="M1063.6 231.6 L1063.6 235 M1061.8 233.4 L1063.6 235.2 L1065.4 233.4 M1070.6 231.6 L1070.6 235 M1068.8 233.4 L1070.6 235.2 L1072.4 233.4" fill="none" stroke="#2F6DA6" stroke-width="1.3"/><path d="M1059 237.6 H1075.4 M1059 240.8 H1075.4" stroke="#5E5E5E" stroke-width="1.8"/><path d="M1058 254.6 Q1058 253.4 1059.2 253.4 L1062.4 253.4 L1063.6 251.4 L1070 251.4 L1071.2 253.4 L1074.6 253.4 Q1075.8 253.4 1075.8 254.6 L1075.8 263.6 Q1075.8 264.8 1074.6 264.8 L1059.2 264.8 Q1058 264.8 1058 263.6Z" fill="#2F6DA6"/><circle cx="1066.9" cy="258.8" r="4.3" fill="#fff"/><circle cx="1066.9" cy="258.8" r="2.5" fill="#5E5E5E"/><rect x="1061.6" y="275.6" width="14" height="15" fill="none" stroke="#B4B4B4" stroke-width="1.3"/><path d="M1059.2 286 L1067.6 279.2 L1072.2 290.6 L1060.8 292.2Z" fill="#F7F7F7" stroke="#5E5E5E" stroke-width="1.9" stroke-linejoin="round"/><rect x="1096.4" y="431.6" width="11.6" height="13" fill="none" stroke="#B4B4B4" stroke-width="1.2"/><path d="M1092.8 441 L1100 434.4 L1104.6 445.6 L1093.6 446.4Z" fill="#EDEDED" stroke="#6E6E6E" stroke-width="1.2" stroke-linejoin="round"/><path d="M1063.4 474.2 A5.4 5.4 0 1 1 1062.6 479.6" fill="none" stroke="#2F6DA6" stroke-width="2.4"/><path d="M1060.4 470.6 L1060.8 477 L1067 476Z" fill="#2F6DA6"/><path d="M1064.6 496.4 L1059.4 496.4 L1059.4 507 L1061.8 509.4 L1064.6 509.4" fill="none" stroke="#5E5E5E" stroke-width="1.7"/><path d="M1069.4 496.4 L1072.6 496.4 L1075 499 L1075 509.4 L1069.4 509.4" fill="none" stroke="#5E5E5E" stroke-width="1.5"/><path d="M1067 494.4 V511.6" stroke="#E07820" stroke-width="1.9"/><path d="M1062.8 520.4 V533.6 H1076 M1059 524 H1072.4 V537.4" fill="none" stroke="#E07820" stroke-width="2"/><rect x="1058" y="521.6" width="1.6" height="1.6" fill="#E07820"/><rect x="1071.4" y="536.4" width="2" height="1.6" fill="#E07820"/><rect x="1059.3" y="547.2" width="15.6" height="15.6" fill="#fff" stroke="#5E5E5E" stroke-width="1.7"/><path d="M1059.3 547.2 L1074.9 547.2 L1059.3 562.8Z" fill="#5E5E5E"/><g transform="rotate(-45 1067.1 555)"><ellipse cx="1067.1" cy="555" rx="5.4" ry="3.2" fill="#fff"/><path d="M1061.7 555 A5.4 3.2 0 0 0 1072.5 555Z" fill="#5E5E5E"/></g><rect x="1061.6" y="573.4" width="13.6" height="13.6" fill="none" stroke="#B4B4B4" stroke-width="1.3"/><rect x="1059.4" y="578.6" width="9.6" height="10.2" fill="#F7F7F7" stroke="#5E5E5E" stroke-width="1.8"/><g stroke="#E07820" stroke-width="1.5" fill="none"><path d="M1066.4 598.4 V600.6 M1058.4 606.6 H1060.6 M1060.7 600.8 L1062.3 602.4 M1072.2 600.8 L1070.6 602.4 M1060.7 612.4 L1062.3 610.8"/><path d="M1062.4 608.4 A4.2 4.2 0 1 1 1070.4 605.2"/></g><circle cx="1071.2" cy="610.9" r="4" fill="#F7F7F7" stroke="#2F6DA6" stroke-width="1.6"/><path d="M1071.2 607.6 A3.3 3.3 0 0 1 1071.2 614.2Z" fill="#2F6DA6"/><path d="M1058 637 L1058 627.6 L1059.6 633.4 L1061 630.6 L1062.8 634 L1064.2 624.6 L1066 633.4 L1067.2 628.6 L1069 634.6 L1070.6 633 L1072 634.6 L1074.8 624.4 L1076 628 L1076 637Z" fill="#2F6DA6"/><path d="M1058 639.8 H1076" stroke="#8C8C8C" stroke-width="1.3"/><rect x="1066.6" y="638" width="2.2" height="3.6" fill="#6E6E6E"/><path d="M1058.6 655 V650.8 H1071.4 V654 M1058.6 660.6 V663.6 H1062" fill="none" stroke="#8C8C8C" stroke-width="1.3"/><g transform="rotate(-30 1069.4 659.8)"><rect x="1065" y="652.6" width="9" height="14.4" rx="1.2" fill="#9A5FC0"/></g><rect x="1058" y="676.4" width="6" height="3.6" fill="#2F6DA6"/><path d="M1060.9 680 V690" stroke="#2F6DA6" stroke-width="1.6"/><path d="M1058.6 693.4 L1060 690.4 L1062 690.4 L1063.2 693.4Z" fill="#A8A8A8"/><path d="M1068.6 677.6 L1072.6 677.6 L1072.6 681 L1075.4 685 L1075.4 693 L1065.8 693 L1065.8 685 L1068.6 681Z" fill="#F7F7F7" stroke="#A0A0A0" stroke-width="1.4" stroke-linejoin="round"/><rect x="1066.5" y="686.2" width="8.2" height="4" fill="#2F6DA6"/></svg>
<div class="b " style="left:121px;top:866px;width:933px;height:23px;background:#F0F0F0;"></div>
<div class="b " style="left:304px;top:866px;width:733px;height:4px;background:#FAFAFA;"></div>
<div class="b " style="left:121px;top:866px;width:23px;height:23px;background:#C2DBF5;border:1px solid #7FB2E6;border-top:none;"></div>
<div class="b " style="left:221px;top:867px;width:59px;height:21px;background:#fff;"></div>
<span class="t " style="left:223.20px;top:870.00px;font-size:12.6px;line-height:14px;color:#111;transform:scaleX(0.8565);">61%</span>
<svg style="left:0;top:860px" width="1333" height="30" viewBox="0 860 1333 30"><rect x="125.5" y="871" width="14" height="13" fill="#fff" stroke="#7A7A7A" stroke-width="1"/><path d="M132.5 868.6 V886.4 M123.4 877.5 H141.6 M130.3 871 L132.5 868.6 L134.700 871 M130.3 884 L132.5 886.4 L134.7 884 M125.8 875.3 L123.4 877.5 L125.800 879.7 M139.2 875.3 L141.6 877.5 L139.2 879.7" fill="none" stroke="#5A5A5A" stroke-width="1.2"/><rect x="148.5" y="871" width="14.600" height="13" fill="#fff" stroke="#7A7A7A" stroke-width="1"/><path d="M149.6 877.5 H162 M152.200 875 L149.6 877.5 L152.2 880 M159.4 875 L162 877.5 L159.4 880" fill="none" stroke="#5A5A5A" stroke-width="1.2"/><rect x="172" y="871" width="14" height="13" fill="#fff" stroke="#7A7A7A" stroke-width="1"/><path d="M179 869.4 V885.6 M176.5 872 L179 869.4 L181.5 872 M176.5 883 L179 885.6 L181.5 883" fill="none" stroke="#5A5A5A" stroke-width="1.2"/><rect x="192" y="868.4" width="1" height="18" fill="#8A8A8A"/><rect x="201.2" y="876.5" width="11.8" height="2" fill="#444"/><path d="M287 877.5 H298.800 M292.9 871.600 V883.400" stroke="#444" stroke-width="2" fill="none"/><path d="M268 875.600 L271.4 879.600 L274.800 875.600" fill="none" stroke="#3A3A3A" stroke-width="1.9"/><path d="M314.6 874.400 L310.4 877.700 L314.600 881" fill="none" stroke="#C2C2C2" stroke-width="1.800"/><path d="M1026.4 874.400 L1030.6 877.700 L1026.400 881" fill="none" stroke="#C2C2C2" stroke-width="1.800"/></svg>
</body></html>
